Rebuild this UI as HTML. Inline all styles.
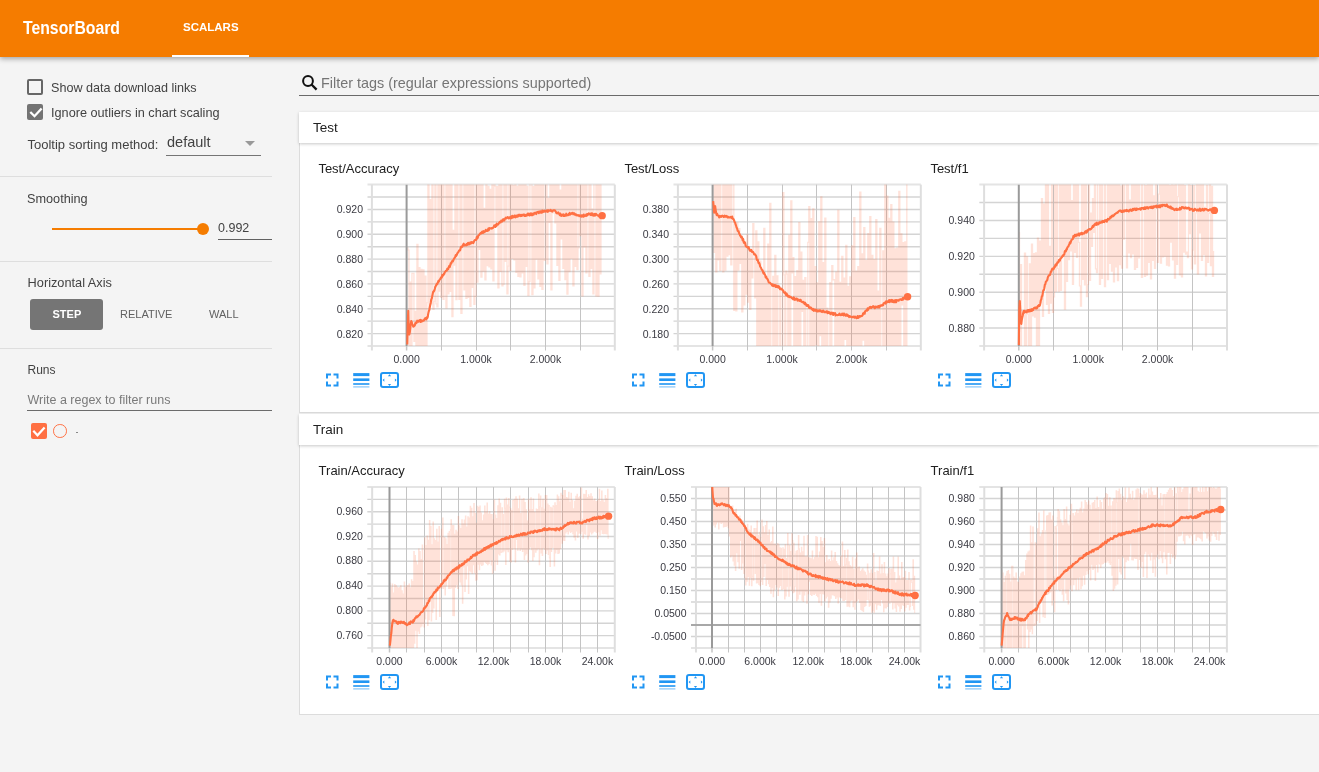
<!DOCTYPE html>
<html><head><meta charset="utf-8"><style>
html,body{margin:0;padding:0;}
body{width:1319px;height:772px;overflow:hidden;background:#f4f4f4;position:relative;font-family:"Liberation Sans", sans-serif;}
.t{position:absolute;white-space:nowrap;}
.r{position:absolute;}
.ic{position:absolute;overflow:visible;}
.ch{position:absolute;left:0;top:0;}
.yl{position:absolute;font-size:10.5px;line-height:10.5px;color:#3a3a42;white-space:nowrap;text-align:right;}
.xl{position:absolute;width:80px;text-align:center;font-size:10.5px;line-height:10.5px;color:#3a3a42;white-space:nowrap;}
</style></head><body>
<div id="wrap" style="position:absolute;left:0;top:0;width:1319px;height:772px;will-change:transform"><div class="r" style="left:0px;top:0px;width:1319px;height:57px;background:#f57c00;box-shadow:0 2px 5px rgba(0,0,0,0.32);z-index:2"></div><div class="t" style="left:23.20px;top:18.76px;font-size:18px;line-height:18px;color:#fff;font-weight:700;transform:scaleX(0.876);transform-origin:0 0;z-index:3">TensorBoard</div><div class="t" style="left:183.00px;top:22.27px;font-size:11.5px;line-height:11.5px;color:#fff;font-weight:700;z-index:3">SCALARS</div><div class="r" style="left:172px;top:55px;width:77px;height:2px;background:#fff;z-index:3"></div><div class="r" style="left:27px;top:79px;width:16px;height:16px;box-sizing:border-box;border:2px solid #666;border-radius:2px"></div><div class="t" style="left:51.00px;top:82.13px;font-size:12.6px;line-height:12.6px;color:#424242;font-weight:400;">Show data download links</div><div class="r" style="left:27px;top:104px;width:16px;height:16px;background:#737373;border-radius:2px"></div><svg class="ic" style="left:27px;top:104px" width="16" height="16" viewBox="0 0 16 16"><path d="M3.3,8 L7.5,12.2 L14.6,4.4" fill="none" stroke="#fff" stroke-width="2.3"/></svg><div class="t" style="left:51.00px;top:106.85px;font-size:12.7px;line-height:12.7px;color:#424242;font-weight:400;">Ignore outliers in chart scaling</div><div class="t" style="left:27.50px;top:138.00px;font-size:13px;line-height:13px;color:#424242;font-weight:400;">Tooltip sorting method:</div><div class="t" style="left:167.00px;top:134.73px;font-size:14.5px;line-height:14.5px;color:#424242;font-weight:400;">default</div><svg class="ic" style="left:244px;top:140px" width="12" height="7" viewBox="0 0 12 7"><path d="M1,1 H11 L6,6Z" fill="#999"/></svg><div class="r" style="left:166px;top:155px;width:95px;height:1px;background:#757575"></div><div class="r" style="left:0px;top:176px;width:272px;height:1px;background:#dedede"></div><div class="t" style="left:27.00px;top:193.05px;font-size:12.7px;line-height:12.7px;color:#424242;font-weight:400;">Smoothing</div><div class="r" style="left:52px;top:227.8px;width:150px;height:2.2px;background:#f57c00"></div><div class="r" style="left:196.6px;top:223px;width:12px;height:12px;border-radius:50%;background:#f57c00"></div><div class="t" style="left:218.00px;top:222.12px;font-size:12.5px;line-height:12.5px;color:#424242;font-weight:400;">0.992</div><div class="r" style="left:218px;top:239px;width:54px;height:1px;background:#616161"></div><div class="r" style="left:0px;top:261px;width:272px;height:1px;background:#dedede"></div><div class="t" style="left:27.60px;top:276.91px;font-size:12.75px;line-height:12.75px;color:#424242;font-weight:400;">Horizontal Axis</div><div class="r" style="left:30px;top:299px;width:73px;height:31px;background:#757575;border-radius:3px"></div><div class="t" style="left:52.50px;top:308.69px;font-size:11px;line-height:11px;color:#fff;font-weight:700;">STEP</div><div class="t" style="left:120.00px;top:308.69px;font-size:11px;line-height:11px;color:#616161;font-weight:400;">RELATIVE</div><div class="t" style="left:209.00px;top:308.69px;font-size:11px;line-height:11px;color:#616161;font-weight:400;">WALL</div><div class="r" style="left:0px;top:348px;width:272px;height:1px;background:#dedede"></div><div class="t" style="left:27.50px;top:363.84px;font-size:12px;line-height:12px;color:#424242;font-weight:400;">Runs</div><div class="t" style="left:27.50px;top:394.02px;font-size:12.5px;line-height:12.5px;color:#7a7a7a;font-weight:400;">Write a regex to filter runs</div><div class="r" style="left:27px;top:409.5px;width:245px;height:1.2px;background:#6b6b6b"></div><div class="r" style="left:31px;top:423px;width:16px;height:16px;background:#ff7043;border-radius:2px"></div><svg class="ic" style="left:31px;top:423px" width="16" height="16" viewBox="0 0 16 16"><path d="M2.3,7.7 L6.5,12.3 L13.6,4.5" fill="none" stroke="#fff" stroke-width="2.2"/></svg><div class="r" style="left:53.1px;top:424.2px;width:13.6px;height:13.6px;box-sizing:border-box;border:1.8px solid #ff7043;border-radius:50%"></div><div class="r" style="left:76px;top:432px;width:2px;height:1px;background:#888"></div><svg class="ic" style="left:300.5px;top:74px" width="18" height="18" viewBox="0 0 18 18"><circle cx="7" cy="7" r="4.9" fill="none" stroke="#111" stroke-width="2"/><path d="M10.5,10.5 L15.6,15.6" stroke="#111" stroke-width="2.3"/></svg><div class="t" style="left:321.00px;top:75.81px;font-size:14.4px;line-height:14.4px;color:#757575;font-weight:400;">Filter tags (regular expressions supported)</div><div class="r" style="left:299px;top:95px;width:1020px;height:1px;background:#6a6a6a"></div><div class="r" style="left:299px;top:143px;width:1020px;height:269px;background:#fff;border-left:1px solid #dcdcdc;border-bottom:1px solid #dcdcdc"></div><div class="r" style="left:299px;top:112px;width:1020px;height:31px;background:#fff;box-shadow:0 1px 3px rgba(0,0,0,0.22)"></div><div class="t" style="left:313.00px;top:120.57px;font-size:13.5px;line-height:13.5px;color:#212121;font-weight:400;">Test</div><div class="r" style="left:299px;top:445px;width:1020px;height:269px;background:#fff;border-left:1px solid #dcdcdc;border-bottom:1px solid #dcdcdc"></div><div class="r" style="left:299px;top:414px;width:1020px;height:31px;background:#fff;box-shadow:0 1px 3px rgba(0,0,0,0.22)"></div><div class="t" style="left:313.00px;top:422.57px;font-size:13.5px;line-height:13.5px;color:#212121;font-weight:400;">Train</div><svg class="ch" width="1319" height="772" viewBox="0 0 1319 772"><line x1="367.5" y1="184.60" x2="614.8" y2="184.60" stroke="#e4e4e4" stroke-width="2"/><line x1="367.5" y1="197.02" x2="614.8" y2="197.02" stroke="#d4d4d4" stroke-width="1.4"/><line x1="367.5" y1="209.43" x2="614.8" y2="209.43" stroke="#d4d4d4" stroke-width="1.4"/><line x1="367.5" y1="221.85" x2="614.8" y2="221.85" stroke="#d4d4d4" stroke-width="1.4"/><line x1="367.5" y1="234.26" x2="614.8" y2="234.26" stroke="#d4d4d4" stroke-width="1.4"/><line x1="367.5" y1="246.68" x2="614.8" y2="246.68" stroke="#d4d4d4" stroke-width="1.4"/><line x1="367.5" y1="259.09" x2="614.8" y2="259.09" stroke="#d4d4d4" stroke-width="1.4"/><line x1="367.5" y1="271.51" x2="614.8" y2="271.51" stroke="#d4d4d4" stroke-width="1.4"/><line x1="367.5" y1="283.92" x2="614.8" y2="283.92" stroke="#d4d4d4" stroke-width="1.4"/><line x1="367.5" y1="296.34" x2="614.8" y2="296.34" stroke="#d4d4d4" stroke-width="1.4"/><line x1="367.5" y1="308.75" x2="614.8" y2="308.75" stroke="#d4d4d4" stroke-width="1.4"/><line x1="367.5" y1="321.17" x2="614.8" y2="321.17" stroke="#d4d4d4" stroke-width="1.4"/><line x1="367.5" y1="333.58" x2="614.8" y2="333.58" stroke="#d4d4d4" stroke-width="1.4"/><line x1="367.5" y1="346.00" x2="614.8" y2="346.00" stroke="#e4e4e4" stroke-width="2"/><line x1="371.90" y1="184.6" x2="371.90" y2="350.5" stroke="#dedede" stroke-width="2"/><line x1="441.50" y1="184.6" x2="441.50" y2="350.5" stroke="#c4c4c4" stroke-width="1"/><line x1="476.50" y1="184.6" x2="476.50" y2="350.5" stroke="#c4c4c4" stroke-width="1"/><line x1="510.50" y1="184.6" x2="510.50" y2="350.5" stroke="#c4c4c4" stroke-width="1"/><line x1="545.50" y1="184.6" x2="545.50" y2="350.5" stroke="#c4c4c4" stroke-width="1"/><line x1="580.50" y1="184.6" x2="580.50" y2="350.5" stroke="#c4c4c4" stroke-width="1"/><line x1="614.80" y1="184.6" x2="614.80" y2="350.5" stroke="#dedede" stroke-width="2"/><clipPath id="c1"><rect x="367.5" y="184.6" width="247.29999999999995" height="161.4"/></clipPath><g clip-path="url(#c1)"><path d="M407.27,247.2h1.35V250.7h-1.35ZM408.27,249.5h1.35V346.2h-1.35ZM409.27,281.5h1.35V346.2h-1.35ZM410.27,281.5h1.35V350.2h-1.35ZM411.27,272.8h1.35V350.2h-1.35ZM412.27,272.7h1.35V274.0h-1.35ZM413.27,272.7h1.35V342.1h-1.35ZM414.27,310.8h1.35V342.1h-1.35ZM415.27,310.8h1.35V366.5h-1.35ZM416.27,243.7h1.35V366.5h-1.35ZM417.27,243.7h1.35V354.6h-1.35ZM418.27,267.1h1.35V354.6h-1.35ZM419.27,267.1h1.35V353.1h-1.35ZM420.27,268.8h1.35V353.1h-1.35ZM421.27,268.8h1.35V375.4h-1.35ZM422.27,269.3h1.35V375.4h-1.35ZM423.27,269.3h1.35V376.8h-1.35ZM424.27,275.6h1.35V376.8h-1.35ZM425.27,275.6h1.35V373.9h-1.35ZM426.27,302.1h1.35V373.9h-1.35ZM427.27,146.7h1.35V303.3h-1.35ZM428.27,146.7h1.35V310.2h-1.35ZM429.27,198.9h1.35V310.2h-1.35ZM430.27,198.9h1.35V304.5h-1.35ZM431.27,114.5h1.35V304.5h-1.35ZM432.27,114.5h1.35V310.1h-1.35ZM433.27,300.9h1.35V310.1h-1.35ZM434.27,108.9h1.35V302.1h-1.35ZM435.27,108.9h1.35V304.4h-1.35ZM436.27,303.2h1.35V307.6h-1.35ZM437.27,113.7h1.35V307.6h-1.35ZM438.27,113.7h1.35V291.7h-1.35ZM439.27,113.2h1.35V291.7h-1.35ZM440.27,113.2h1.35V298.0h-1.35ZM441.27,150.3h1.35V298.0h-1.35ZM442.27,150.3h1.35V299.9h-1.35ZM443.27,169.2h1.35V299.9h-1.35ZM444.27,141.4h1.35V170.4h-1.35ZM445.27,141.4h1.35V308.4h-1.35ZM446.27,143.1h1.35V308.4h-1.35ZM447.27,143.1h1.35V294.4h-1.35ZM448.27,132.2h1.35V294.4h-1.35ZM449.27,132.2h1.35V291.9h-1.35ZM450.27,117.3h1.35V291.9h-1.35ZM451.27,117.3h1.35V317.2h-1.35ZM452.27,229.8h1.35V317.2h-1.35ZM453.27,229.8h1.35V265.7h-1.35ZM454.27,148.4h1.35V265.7h-1.35ZM455.27,148.4h1.35V300.3h-1.35ZM456.27,158.8h1.35V300.3h-1.35ZM457.27,158.8h1.35V253.4h-1.35ZM458.27,252.2h1.35V299.9h-1.35ZM459.27,145.9h1.35V299.9h-1.35ZM460.27,145.9h1.35V314.1h-1.35ZM461.27,141.1h1.35V314.1h-1.35ZM462.27,141.1h1.35V167.7h-1.35ZM463.27,166.5h1.35V290.5h-1.35ZM464.27,163.8h1.35V290.5h-1.35ZM465.27,163.8h1.35V299.1h-1.35ZM466.27,155.8h1.35V299.1h-1.35ZM467.27,155.8h1.35V298.0h-1.35ZM468.27,163.6h1.35V298.0h-1.35ZM469.27,163.6h1.35V306.9h-1.35ZM470.27,140.7h1.35V306.9h-1.35ZM471.27,140.7h1.35V288.0h-1.35ZM472.27,160.8h1.35V288.0h-1.35ZM473.27,160.8h1.35V305.0h-1.35ZM474.27,295.7h1.35V305.0h-1.35ZM475.27,181.1h1.35V296.9h-1.35ZM476.27,181.1h1.35V282.7h-1.35ZM477.27,182.9h1.35V282.7h-1.35ZM478.27,182.9h1.35V250.1h-1.35ZM479.27,175.9h1.35V250.1h-1.35ZM480.27,175.9h1.35V277.7h-1.35ZM481.27,151.7h1.35V277.7h-1.35ZM482.27,151.7h1.35V271.8h-1.35ZM483.27,207.7h1.35V271.8h-1.35ZM484.27,207.7h1.35V280.5h-1.35ZM485.27,169.0h1.35V280.5h-1.35ZM486.27,169.0h1.35V266.2h-1.35ZM487.27,185.7h1.35V266.2h-1.35ZM488.27,185.7h1.35V267.6h-1.35ZM489.27,188.8h1.35V267.6h-1.35ZM490.27,188.8h1.35V269.4h-1.35ZM491.27,174.7h1.35V269.4h-1.35ZM492.27,174.7h1.35V281.5h-1.35ZM493.27,177.4h1.35V281.5h-1.35ZM494.27,177.4h1.35V187.0h-1.35ZM495.27,185.8h1.35V226.2h-1.35ZM496.27,185.9h1.35V226.2h-1.35ZM497.27,185.9h1.35V288.6h-1.35ZM498.27,154.4h1.35V288.6h-1.35ZM499.27,154.4h1.35V272.0h-1.35ZM500.27,178.7h1.35V272.0h-1.35ZM501.27,178.7h1.35V286.6h-1.35ZM502.27,283.8h1.35V286.6h-1.35ZM503.27,176.1h1.35V285.0h-1.35ZM504.27,176.1h1.35V261.9h-1.35ZM505.27,179.7h1.35V261.9h-1.35ZM506.27,179.7h1.35V294.5h-1.35ZM507.27,265.5h1.35V294.5h-1.35ZM508.27,149.3h1.35V266.7h-1.35ZM509.27,149.3h1.35V271.1h-1.35ZM510.27,154.0h1.35V271.1h-1.35ZM511.27,154.0h1.35V258.9h-1.35ZM512.27,184.8h1.35V258.9h-1.35ZM513.27,184.8h1.35V260.5h-1.35ZM514.27,155.5h1.35V260.5h-1.35ZM515.27,155.5h1.35V273.0h-1.35ZM516.27,185.7h1.35V273.0h-1.35ZM517.27,185.7h1.35V277.0h-1.35ZM518.27,162.1h1.35V277.0h-1.35ZM519.27,162.1h1.35V277.6h-1.35ZM520.27,176.9h1.35V277.6h-1.35ZM521.27,176.9h1.35V273.5h-1.35ZM522.27,172.8h1.35V273.5h-1.35ZM523.27,172.8h1.35V286.0h-1.35ZM524.27,181.0h1.35V286.0h-1.35ZM525.27,181.0h1.35V267.0h-1.35ZM526.27,185.7h1.35V267.0h-1.35ZM527.27,185.7h1.35V296.1h-1.35ZM528.27,281.0h1.35V296.1h-1.35ZM529.27,152.5h1.35V282.2h-1.35ZM530.27,152.5h1.35V170.1h-1.35ZM531.27,168.9h1.35V295.2h-1.35ZM532.27,185.9h1.35V295.2h-1.35ZM533.27,185.9h1.35V288.4h-1.35ZM534.27,158.9h1.35V288.4h-1.35ZM535.27,158.9h1.35V259.7h-1.35ZM536.27,172.9h1.35V259.7h-1.35ZM537.27,172.9h1.35V279.4h-1.35ZM538.27,174.1h1.35V279.4h-1.35ZM539.27,174.1h1.35V287.0h-1.35ZM540.27,179.9h1.35V287.0h-1.35ZM541.27,179.9h1.35V289.9h-1.35ZM542.27,182.7h1.35V289.9h-1.35ZM543.27,182.7h1.35V261.0h-1.35ZM544.27,258.3h1.35V261.0h-1.35ZM545.27,183.2h1.35V259.5h-1.35ZM546.27,183.2h1.35V264.5h-1.35ZM547.27,197.8h1.35V264.5h-1.35ZM548.27,197.8h1.35V222.9h-1.35ZM549.27,176.6h1.35V222.9h-1.35ZM550.27,176.6h1.35V290.4h-1.35ZM551.27,183.8h1.35V290.4h-1.35ZM552.27,183.8h1.35V213.6h-1.35ZM553.27,160.6h1.35V213.6h-1.35ZM554.27,160.6h1.35V223.6h-1.35ZM555.27,176.9h1.35V223.6h-1.35ZM556.27,176.9h1.35V266.0h-1.35ZM557.27,182.8h1.35V266.0h-1.35ZM558.27,182.8h1.35V281.0h-1.35ZM559.27,189.6h1.35V281.0h-1.35ZM560.27,189.6h1.35V239.6h-1.35ZM561.27,173.0h1.35V239.6h-1.35ZM562.27,173.0h1.35V269.1h-1.35ZM563.27,179.0h1.35V269.1h-1.35ZM564.27,179.0h1.35V280.3h-1.35ZM565.27,146.9h1.35V280.3h-1.35ZM566.27,146.9h1.35V294.8h-1.35ZM567.27,177.9h1.35V294.8h-1.35ZM568.27,177.9h1.35V272.2h-1.35ZM569.27,178.4h1.35V272.2h-1.35ZM570.27,178.4h1.35V258.9h-1.35ZM571.27,179.1h1.35V258.9h-1.35ZM572.27,179.1h1.35V286.6h-1.35ZM573.27,179.4h1.35V286.6h-1.35ZM574.27,179.4h1.35V267.1h-1.35ZM575.27,146.4h1.35V267.1h-1.35ZM576.27,146.4h1.35V270.2h-1.35ZM577.27,247.2h1.35V270.2h-1.35ZM578.27,166.1h1.35V248.4h-1.35ZM579.27,166.1h1.35V236.3h-1.35ZM580.27,149.5h1.35V236.3h-1.35ZM581.27,149.5h1.35V296.4h-1.35ZM582.27,179.7h1.35V296.4h-1.35ZM583.27,179.7h1.35V247.5h-1.35ZM584.27,181.9h1.35V247.5h-1.35ZM585.27,181.9h1.35V273.5h-1.35ZM586.27,177.5h1.35V273.5h-1.35ZM587.27,162.0h1.35V178.7h-1.35ZM588.27,162.0h1.35V276.9h-1.35ZM589.27,170.0h1.35V276.9h-1.35ZM590.27,170.0h1.35V269.1h-1.35ZM591.27,208.5h1.35V269.1h-1.35ZM592.27,208.5h1.35V294.4h-1.35ZM593.27,179.8h1.35V294.4h-1.35ZM594.27,179.8h1.35V183.9h-1.35ZM595.27,182.7h1.35V296.5h-1.35ZM596.27,148.4h1.35V296.5h-1.35ZM597.27,148.4h1.35V296.7h-1.35ZM598.27,175.6h1.35V296.7h-1.35ZM599.27,175.6h1.35V274.5h-1.35ZM600.27,175.3h1.35V274.5h-1.35Z" fill="#ff7043" fill-opacity="0.2"/><line x1="406.60" y1="184.6" x2="406.60" y2="350.5" stroke="#9a9a9a" stroke-width="2"/><path d="M407.27,344.43 L407.77,323.03 L408.27,310.70 L408.77,333.72 L409.27,334.50 L409.77,332.51 L410.27,328.33 L410.77,323.28 L411.27,321.04 L411.77,322.26 L412.27,324.52 L412.77,324.93 L413.27,326.78 L413.77,326.41 L414.27,325.97 L414.77,325.52 L415.27,323.27 L415.77,322.65 L416.27,323.17 L416.77,322.17 L417.27,320.69 L417.77,321.35 L418.27,321.80 L418.77,321.71 L419.27,320.29 L419.77,320.48 L420.27,319.80 L420.77,322.03 L421.27,320.30 L421.77,321.46 L422.27,320.88 L422.77,320.71 L423.27,320.25 L423.77,320.64 L424.27,319.82 L424.77,318.84 L425.27,318.10 L425.77,318.64 L426.27,319.36 L426.77,317.27 L427.27,318.21 L427.77,316.83 L428.27,313.45 L428.77,311.26 L429.27,310.06 L429.77,307.19 L430.27,304.82 L430.77,302.68 L431.27,299.51 L431.77,298.60 L432.27,296.03 L432.77,293.61 L433.27,291.47 L433.77,291.56 L434.27,290.59 L434.77,288.94 L435.27,286.89 L435.77,286.03 L436.27,285.04 L436.77,283.87 L437.27,284.18 L437.77,282.94 L438.27,281.16 L438.77,281.78 L439.27,280.14 L439.77,279.61 L440.27,279.04 L440.77,278.10 L441.27,277.12 L441.77,277.55 L442.27,274.97 L442.77,275.62 L443.27,275.45 L443.77,273.89 L444.27,274.04 L444.77,271.95 L445.27,271.87 L445.77,270.91 L446.27,270.57 L446.77,270.65 L447.27,268.74 L447.77,268.57 L448.27,269.11 L448.77,267.10 L449.27,265.86 L449.77,267.02 L450.27,265.15 L450.77,263.11 L451.27,263.55 L451.77,261.74 L452.27,260.94 L452.77,261.44 L453.27,260.40 L453.77,259.05 L454.27,258.42 L454.77,257.69 L455.27,256.65 L455.77,255.04 L456.27,255.79 L456.77,255.01 L457.27,253.42 L457.77,252.59 L458.27,252.28 L458.77,251.18 L459.27,250.26 L459.77,250.53 L460.27,249.81 L460.77,247.29 L461.27,246.56 L461.77,247.18 L462.27,246.79 L462.77,245.49 L463.27,244.38 L463.77,243.72 L464.27,245.38 L464.77,245.51 L465.27,245.00 L465.77,244.84 L466.27,245.27 L466.77,244.13 L467.27,244.95 L467.77,243.30 L468.27,242.77 L468.77,244.41 L469.27,243.97 L469.77,244.09 L470.27,242.45 L470.77,242.72 L471.27,243.27 L471.77,241.96 L472.27,242.46 L472.77,242.89 L473.27,243.10 L473.77,242.03 L474.27,240.73 L474.77,240.19 L475.27,239.87 L475.77,239.83 L476.27,239.86 L476.77,237.03 L477.27,238.57 L477.77,237.72 L478.27,235.42 L478.77,235.34 L479.27,234.82 L479.77,234.12 L480.27,233.44 L480.77,232.82 L481.27,233.50 L481.77,232.57 L482.27,231.55 L482.77,233.00 L483.27,232.73 L483.77,231.16 L484.27,232.22 L484.77,231.84 L485.27,231.03 L485.77,229.76 L486.27,230.94 L486.77,231.07 L487.27,230.85 L487.77,230.74 L488.27,228.68 L488.77,230.30 L489.27,228.02 L489.77,228.39 L490.27,228.55 L490.77,228.53 L491.27,228.03 L491.77,228.64 L492.27,228.09 L492.77,228.03 L493.27,227.36 L493.77,226.61 L494.27,225.36 L494.77,226.53 L495.27,226.84 L495.77,224.78 L496.27,226.28 L496.77,223.68 L497.27,224.21 L497.77,224.67 L498.27,224.23 L498.77,223.57 L499.27,222.54 L499.77,222.11 L500.27,221.52 L500.77,222.33 L501.27,220.54 L501.77,220.44 L502.27,221.44 L502.77,220.47 L503.27,219.13 L503.77,219.72 L504.27,220.52 L504.77,219.22 L505.27,218.31 L505.77,217.69 L506.27,218.40 L506.77,217.68 L507.27,217.63 L507.77,217.01 L508.27,218.14 L508.77,218.45 L509.27,217.66 L509.77,217.78 L510.27,216.92 L510.77,218.40 L511.27,216.66 L511.77,217.98 L512.27,215.78 L512.77,217.14 L513.27,217.50 L513.77,216.68 L514.27,215.74 L514.77,215.54 L515.27,217.36 L515.77,217.31 L516.27,215.51 L516.77,215.85 L517.27,216.75 L517.77,216.77 L518.27,214.78 L518.77,215.91 L519.27,215.16 L519.77,214.72 L520.27,216.06 L520.77,215.52 L521.27,214.82 L521.77,216.03 L522.27,214.96 L522.77,214.76 L523.27,214.78 L523.77,214.48 L524.27,215.90 L524.77,214.66 L525.27,215.99 L525.77,215.36 L526.27,214.96 L526.77,215.71 L527.27,214.45 L527.77,213.61 L528.27,214.98 L528.77,213.55 L529.27,215.47 L529.77,215.52 L530.27,214.12 L530.77,213.36 L531.27,215.29 L531.77,213.62 L532.27,215.17 L532.77,213.92 L533.27,214.74 L533.77,214.58 L534.27,212.80 L534.77,213.09 L535.27,213.19 L535.77,212.53 L536.27,214.09 L536.77,212.31 L537.27,212.24 L537.77,211.99 L538.27,211.80 L538.77,213.19 L539.27,211.67 L539.77,212.43 L540.27,211.24 L540.77,212.69 L541.27,212.50 L541.77,212.74 L542.27,210.58 L542.77,211.86 L543.27,211.87 L543.77,210.85 L544.27,211.53 L544.77,210.56 L545.27,211.04 L545.77,211.64 L546.27,211.58 L546.77,210.44 L547.27,210.28 L547.77,211.87 L548.27,210.22 L548.77,210.77 L549.27,210.64 L549.77,210.52 L550.27,210.91 L550.77,209.95 L551.27,210.75 L551.77,211.23 L552.27,211.63 L552.77,210.81 L553.27,210.21 L553.77,210.33 L554.27,210.18 L554.77,210.36 L555.27,211.00 L555.77,211.45 L556.27,213.02 L556.77,212.86 L557.27,213.51 L557.77,212.80 L558.27,212.39 L558.77,213.53 L559.27,214.10 L559.77,215.06 L560.27,213.57 L560.77,215.07 L561.27,215.80 L561.77,214.77 L562.27,215.34 L562.77,214.67 L563.27,215.98 L563.77,214.41 L564.27,215.93 L564.77,215.72 L565.27,215.74 L565.77,215.63 L566.27,213.69 L566.77,215.40 L567.27,214.86 L567.77,215.26 L568.27,215.00 L568.77,213.89 L569.27,214.60 L569.77,212.94 L570.27,214.56 L570.77,213.74 L571.27,213.90 L571.77,213.14 L572.27,213.39 L572.77,212.81 L573.27,214.29 L573.77,213.84 L574.27,213.33 L574.77,214.74 L575.27,214.53 L575.77,214.37 L576.27,215.42 L576.77,214.73 L577.27,215.50 L577.77,215.38 L578.27,215.16 L578.77,215.32 L579.27,216.05 L579.77,215.30 L580.27,215.47 L580.77,215.86 L581.27,216.65 L581.77,215.32 L582.27,216.53 L582.77,215.39 L583.27,216.69 L583.77,214.64 L584.27,216.22 L584.77,216.03 L585.27,215.92 L585.77,215.34 L586.27,214.45 L586.77,215.84 L587.27,214.02 L587.77,215.00 L588.27,214.20 L588.77,213.30 L589.27,213.97 L589.77,213.76 L590.27,214.90 L590.77,213.62 L591.27,215.11 L591.77,213.34 L592.27,213.53 L592.77,214.82 L593.27,215.59 L593.77,214.93 L594.27,213.95 L594.77,215.73 L595.27,215.24 L595.77,213.77 L596.27,214.12 L596.77,214.77 L597.27,215.15 L597.77,215.30 L598.27,215.98 L598.77,215.53 L599.27,216.38 L599.77,215.17 L600.27,215.08 L600.77,215.88 L601.27,216.49 L601.77,215.47 L602.16,215.67" fill="none" stroke="#ff7043" stroke-width="2.1" stroke-linejoin="round"/></g><line x1="406.60" y1="346" x2="406.60" y2="350.5" stroke="#c4c4c4" stroke-width="1.5"/><circle cx="602.16" cy="215.67" r="3.7" fill="#ff7043"/></svg><div class="yl" style="right:956.00px;top:204.34px">0.920</div><div class="yl" style="right:956.00px;top:229.17px">0.900</div><div class="yl" style="right:956.00px;top:254.00px">0.880</div><div class="yl" style="right:956.00px;top:278.83px">0.860</div><div class="yl" style="right:956.00px;top:303.67px">0.840</div><div class="yl" style="right:956.00px;top:328.50px">0.820</div><div class="xl" style="left:366.60px;top:354.11px">0.000</div><div class="xl" style="left:436.00px;top:354.11px">1.000k</div><div class="xl" style="left:505.40px;top:354.11px">2.000k</div><div class="t" style="left:318.40px;top:162.10px;font-size:13px;line-height:13px;color:#212121;font-weight:400;">Test/Accuracy</div><svg class="ic" style="left:323.90px;top:369.80px" width="80" height="22" viewBox="0 0 80 22"><path d="M3,8.6 V4.6 H7 M9.5,4.6 H13.5 V8.6 M13.5,11.600000000000001 V15.600000000000001 H9.5 M7,15.600000000000001 H3 V11.600000000000001" fill="none" stroke="#2196f3" stroke-width="2"/><rect x="29.2" y="3.1" width="16.2" height="3" fill="#2196f3"/><rect x="29.2" y="8.4" width="16.2" height="2.6" fill="#2196f3"/><rect x="29.2" y="13.2" width="16.2" height="1.6" fill="#2196f3"/><rect x="29.2" y="16.3" width="16.2" height="1.2" fill="#2196f3" opacity="0.55"/><rect x="57" y="3" width="17" height="14.1" rx="2" fill="none" stroke="#2196f3" stroke-width="2"/><path d="M63.9,6.199999999999999 L65.5,4.199999999999999 L67.1,6.199999999999999Z M63.9,14.0 L65.5,16.0 L67.1,14.0Z M60.3,8.5 L58.6,10.1 L60.3,11.7Z M70.9,8.5 L72.6,10.1 L70.9,11.7Z" fill="#2196f3"/></svg><svg class="ch" width="1319" height="772" viewBox="0 0 1319 772"><line x1="673.5" y1="184.60" x2="920.8" y2="184.60" stroke="#e4e4e4" stroke-width="2"/><line x1="673.5" y1="197.02" x2="920.8" y2="197.02" stroke="#d4d4d4" stroke-width="1.4"/><line x1="673.5" y1="209.43" x2="920.8" y2="209.43" stroke="#d4d4d4" stroke-width="1.4"/><line x1="673.5" y1="221.85" x2="920.8" y2="221.85" stroke="#d4d4d4" stroke-width="1.4"/><line x1="673.5" y1="234.26" x2="920.8" y2="234.26" stroke="#d4d4d4" stroke-width="1.4"/><line x1="673.5" y1="246.68" x2="920.8" y2="246.68" stroke="#d4d4d4" stroke-width="1.4"/><line x1="673.5" y1="259.09" x2="920.8" y2="259.09" stroke="#d4d4d4" stroke-width="1.4"/><line x1="673.5" y1="271.51" x2="920.8" y2="271.51" stroke="#d4d4d4" stroke-width="1.4"/><line x1="673.5" y1="283.92" x2="920.8" y2="283.92" stroke="#d4d4d4" stroke-width="1.4"/><line x1="673.5" y1="296.34" x2="920.8" y2="296.34" stroke="#d4d4d4" stroke-width="1.4"/><line x1="673.5" y1="308.75" x2="920.8" y2="308.75" stroke="#d4d4d4" stroke-width="1.4"/><line x1="673.5" y1="321.17" x2="920.8" y2="321.17" stroke="#d4d4d4" stroke-width="1.4"/><line x1="673.5" y1="333.58" x2="920.8" y2="333.58" stroke="#d4d4d4" stroke-width="1.4"/><line x1="673.5" y1="346.00" x2="920.8" y2="346.00" stroke="#e4e4e4" stroke-width="2"/><line x1="677.90" y1="184.6" x2="677.90" y2="350.5" stroke="#dedede" stroke-width="2"/><line x1="747.50" y1="184.6" x2="747.50" y2="350.5" stroke="#c4c4c4" stroke-width="1"/><line x1="782.50" y1="184.6" x2="782.50" y2="350.5" stroke="#c4c4c4" stroke-width="1"/><line x1="816.50" y1="184.6" x2="816.50" y2="350.5" stroke="#c4c4c4" stroke-width="1"/><line x1="851.50" y1="184.6" x2="851.50" y2="350.5" stroke="#c4c4c4" stroke-width="1"/><line x1="886.50" y1="184.6" x2="886.50" y2="350.5" stroke="#c4c4c4" stroke-width="1"/><line x1="920.80" y1="184.6" x2="920.80" y2="350.5" stroke="#dedede" stroke-width="2"/><clipPath id="c2"><rect x="673.5" y="184.6" width="247.29999999999995" height="161.4"/></clipPath><g clip-path="url(#c2)"><path d="M713.15,164.2h1.35V253.0h-1.35ZM714.15,162.0h1.35V253.0h-1.35ZM715.15,162.0h1.35V272.6h-1.35ZM716.15,136.9h1.35V272.6h-1.35ZM717.15,136.9h1.35V260.4h-1.35ZM718.15,158.7h1.35V260.4h-1.35ZM719.15,158.7h1.35V271.1h-1.35ZM720.15,155.5h1.35V271.1h-1.35ZM721.15,142.0h1.35V156.7h-1.35ZM722.15,142.0h1.35V272.5h-1.35ZM723.15,152.3h1.35V272.5h-1.35ZM724.15,152.3h1.35V270.8h-1.35ZM725.15,156.3h1.35V270.8h-1.35ZM726.15,156.3h1.35V256.7h-1.35ZM727.15,148.4h1.35V256.7h-1.35ZM728.15,148.4h1.35V255.3h-1.35ZM729.15,150.8h1.35V255.3h-1.35ZM730.15,150.8h1.35V265.6h-1.35ZM731.15,155.4h1.35V265.6h-1.35ZM732.15,147.9h1.35V156.6h-1.35ZM733.15,147.9h1.35V311.0h-1.35ZM734.15,221.8h1.35V311.0h-1.35ZM735.15,221.8h1.35V311.6h-1.35ZM736.15,222.2h1.35V311.6h-1.35ZM737.15,222.2h1.35V270.7h-1.35ZM738.15,227.9h1.35V270.7h-1.35ZM739.15,227.9h1.35V263.9h-1.35ZM740.15,235.6h1.35V263.9h-1.35ZM741.15,235.6h1.35V312.5h-1.35ZM742.15,239.2h1.35V312.5h-1.35ZM743.15,239.2h1.35V305.6h-1.35ZM744.15,243.0h1.35V305.6h-1.35ZM745.15,243.0h1.35V294.7h-1.35ZM746.15,234.3h1.35V294.7h-1.35ZM747.15,234.3h1.35V302.8h-1.35ZM748.15,247.9h1.35V302.8h-1.35ZM749.15,247.9h1.35V310.1h-1.35ZM750.15,250.1h1.35V310.1h-1.35ZM751.15,250.1h1.35V278.5h-1.35ZM752.15,223.0h1.35V278.5h-1.35ZM753.15,223.0h1.35V254.7h-1.35ZM754.15,253.5h1.35V298.4h-1.35ZM755.15,230.2h1.35V298.4h-1.35ZM756.15,230.2h1.35V361.2h-1.35ZM757.15,241.2h1.35V361.2h-1.35ZM758.15,241.2h1.35V352.0h-1.35ZM759.15,260.4h1.35V352.0h-1.35ZM760.15,260.4h1.35V369.2h-1.35ZM761.15,269.1h1.35V369.2h-1.35ZM762.15,269.1h1.35V400.3h-1.35ZM763.15,227.8h1.35V400.3h-1.35ZM764.15,227.8h1.35V396.3h-1.35ZM765.15,275.8h1.35V396.3h-1.35ZM766.15,275.8h1.35V394.3h-1.35ZM767.15,243.6h1.35V394.3h-1.35ZM768.15,243.6h1.35V374.0h-1.35ZM769.15,202.7h1.35V374.0h-1.35ZM770.15,202.7h1.35V371.5h-1.35ZM771.15,370.3h1.35V381.2h-1.35ZM772.15,275.7h1.35V381.2h-1.35ZM773.15,275.7h1.35V373.1h-1.35ZM774.15,254.7h1.35V373.1h-1.35ZM775.15,254.7h1.35V355.3h-1.35ZM776.15,275.3h1.35V355.3h-1.35ZM777.15,275.3h1.35V352.3h-1.35ZM778.15,351.1h1.35V371.1h-1.35ZM779.15,286.8h1.35V371.1h-1.35ZM780.15,286.8h1.35V398.8h-1.35ZM781.15,387.1h1.35V398.8h-1.35ZM782.15,192.0h1.35V388.3h-1.35ZM783.15,192.0h1.35V275.5h-1.35ZM784.15,274.3h1.35V360.1h-1.35ZM785.15,270.6h1.35V360.1h-1.35ZM786.15,270.6h1.35V274.7h-1.35ZM787.15,273.5h1.35V382.5h-1.35ZM788.15,234.7h1.35V382.5h-1.35ZM789.15,234.7h1.35V394.6h-1.35ZM790.15,200.3h1.35V394.6h-1.35ZM791.15,200.3h1.35V273.5h-1.35ZM792.15,257.1h1.35V273.5h-1.35ZM793.15,257.1h1.35V378.0h-1.35ZM794.15,276.0h1.35V378.0h-1.35ZM795.15,276.0h1.35V383.7h-1.35ZM796.15,270.1h1.35V383.7h-1.35ZM797.15,270.1h1.35V398.0h-1.35ZM798.15,221.9h1.35V398.0h-1.35ZM799.15,221.9h1.35V370.6h-1.35ZM800.15,251.6h1.35V370.6h-1.35ZM801.15,251.6h1.35V312.1h-1.35ZM802.15,279.7h1.35V312.1h-1.35ZM803.15,279.7h1.35V388.6h-1.35ZM804.15,277.0h1.35V388.6h-1.35ZM805.15,277.0h1.35V390.5h-1.35ZM806.15,379.7h1.35V390.5h-1.35ZM807.15,241.7h1.35V380.9h-1.35ZM808.15,205.9h1.35V242.9h-1.35ZM809.15,205.9h1.35V369.9h-1.35ZM810.15,218.1h1.35V369.9h-1.35ZM811.15,218.1h1.35V375.7h-1.35ZM812.15,208.2h1.35V375.7h-1.35ZM813.15,208.2h1.35V366.3h-1.35ZM814.15,265.9h1.35V366.3h-1.35ZM815.15,265.9h1.35V345.3h-1.35ZM816.15,282.3h1.35V345.3h-1.35ZM817.15,282.3h1.35V360.4h-1.35ZM818.15,221.3h1.35V360.4h-1.35ZM819.15,221.3h1.35V336.3h-1.35ZM820.15,196.3h1.35V336.3h-1.35ZM821.15,196.3h1.35V371.1h-1.35ZM822.15,262.1h1.35V371.1h-1.35ZM823.15,262.1h1.35V376.2h-1.35ZM824.15,217.4h1.35V376.2h-1.35ZM825.15,217.4h1.35V373.7h-1.35ZM826.15,307.6h1.35V373.7h-1.35ZM827.15,307.6h1.35V365.7h-1.35ZM828.15,364.5h1.35V378.9h-1.35ZM829.15,282.1h1.35V378.9h-1.35ZM830.15,282.1h1.35V369.2h-1.35ZM831.15,265.1h1.35V369.2h-1.35ZM832.15,265.1h1.35V280.6h-1.35ZM833.15,279.1h1.35V280.6h-1.35ZM834.15,279.1h1.35V371.8h-1.35ZM835.15,271.5h1.35V371.8h-1.35ZM836.15,271.5h1.35V363.4h-1.35ZM837.15,209.8h1.35V363.4h-1.35ZM838.15,209.8h1.35V389.0h-1.35ZM839.15,281.8h1.35V389.0h-1.35ZM840.15,281.8h1.35V373.3h-1.35ZM841.15,255.8h1.35V373.3h-1.35ZM842.15,255.8h1.35V367.2h-1.35ZM843.15,277.5h1.35V367.2h-1.35ZM844.15,277.5h1.35V339.9h-1.35ZM845.15,244.8h1.35V339.9h-1.35ZM846.15,244.8h1.35V361.8h-1.35ZM847.15,285.7h1.35V361.8h-1.35ZM848.15,285.7h1.35V365.6h-1.35ZM849.15,276.3h1.35V365.6h-1.35ZM850.15,276.3h1.35V396.1h-1.35ZM851.15,245.3h1.35V396.1h-1.35ZM852.15,245.3h1.35V379.4h-1.35ZM853.15,216.9h1.35V379.4h-1.35ZM854.15,216.9h1.35V365.0h-1.35ZM855.15,270.4h1.35V365.0h-1.35ZM856.15,270.4h1.35V377.5h-1.35ZM857.15,266.1h1.35V377.5h-1.35ZM858.15,266.1h1.35V370.1h-1.35ZM859.15,191.4h1.35V370.1h-1.35ZM860.15,191.4h1.35V372.9h-1.35ZM861.15,253.3h1.35V372.9h-1.35ZM862.15,253.3h1.35V340.7h-1.35ZM863.15,226.9h1.35V340.7h-1.35ZM864.15,226.9h1.35V352.3h-1.35ZM865.15,259.7h1.35V352.3h-1.35ZM866.15,259.7h1.35V372.3h-1.35ZM867.15,233.1h1.35V372.3h-1.35ZM868.15,233.1h1.35V369.6h-1.35ZM869.15,215.9h1.35V369.6h-1.35ZM870.15,215.9h1.35V372.0h-1.35ZM871.15,254.8h1.35V372.0h-1.35ZM872.15,254.8h1.35V368.6h-1.35ZM873.15,259.1h1.35V368.6h-1.35ZM874.15,259.1h1.35V395.3h-1.35ZM875.15,219.0h1.35V395.3h-1.35ZM876.15,219.0h1.35V376.0h-1.35ZM877.15,290.6h1.35V376.0h-1.35ZM878.15,290.6h1.35V371.3h-1.35ZM879.15,227.7h1.35V371.3h-1.35ZM880.15,227.7h1.35V393.1h-1.35ZM881.15,369.0h1.35V393.1h-1.35ZM882.15,250.2h1.35V370.2h-1.35ZM883.15,250.2h1.35V369.6h-1.35ZM884.15,183.2h1.35V369.6h-1.35ZM885.15,183.2h1.35V382.0h-1.35ZM886.15,195.4h1.35V382.0h-1.35ZM887.15,195.4h1.35V393.5h-1.35ZM888.15,217.8h1.35V393.5h-1.35ZM889.15,217.8h1.35V373.1h-1.35ZM890.15,204.0h1.35V373.1h-1.35ZM891.15,204.0h1.35V366.4h-1.35ZM892.15,221.4h1.35V366.4h-1.35ZM893.15,221.4h1.35V397.6h-1.35ZM894.15,248.2h1.35V397.6h-1.35ZM895.15,248.2h1.35V368.4h-1.35ZM896.15,247.4h1.35V368.4h-1.35ZM897.15,247.4h1.35V346.7h-1.35ZM898.15,190.8h1.35V346.7h-1.35ZM899.15,190.8h1.35V369.5h-1.35ZM900.15,233.2h1.35V369.5h-1.35ZM901.15,233.2h1.35V305.6h-1.35ZM902.15,242.0h1.35V305.6h-1.35ZM903.15,242.0h1.35V372.1h-1.35ZM904.15,241.2h1.35V372.1h-1.35ZM905.15,241.2h1.35V360.3h-1.35ZM906.15,183.8h1.35V360.3h-1.35Z" fill="#ff7043" fill-opacity="0.2"/><line x1="712.60" y1="184.6" x2="712.60" y2="350.5" stroke="#9a9a9a" stroke-width="2"/><path d="M713.15,201.03 L713.65,206.07 L714.15,212.71 L714.65,207.23 L715.15,206.15 L715.65,209.77 L716.15,213.04 L716.65,215.08 L717.15,213.83 L717.65,215.36 L718.15,215.61 L718.65,215.99 L719.15,217.48 L719.65,215.94 L720.15,216.58 L720.65,216.15 L721.15,216.87 L721.65,216.21 L722.15,215.58 L722.65,216.18 L723.15,216.12 L723.65,217.01 L724.15,216.48 L724.65,215.64 L725.15,216.78 L725.65,215.99 L726.15,216.55 L726.65,215.95 L727.15,216.46 L727.65,217.40 L728.15,216.85 L728.65,217.46 L729.15,217.54 L729.65,217.23 L730.15,217.43 L730.65,216.93 L731.15,217.51 L731.65,217.95 L732.15,216.46 L732.65,218.73 L733.15,218.62 L733.65,219.30 L734.15,220.52 L734.65,222.16 L735.15,222.74 L735.65,224.69 L736.15,225.93 L736.65,227.68 L737.15,228.45 L737.65,230.73 L738.15,231.23 L738.65,231.38 L739.15,233.58 L739.65,234.11 L740.15,235.65 L740.65,236.05 L741.15,237.51 L741.65,236.69 L742.15,237.78 L742.65,240.31 L743.15,239.05 L743.65,242.05 L744.15,242.95 L744.65,242.10 L745.15,243.06 L745.65,245.75 L746.15,246.47 L746.65,246.82 L747.15,247.04 L747.65,247.68 L748.15,247.20 L748.65,247.06 L749.15,249.04 L749.65,250.19 L750.15,250.89 L750.65,250.45 L751.15,249.84 L751.65,250.78 L752.15,251.97 L752.65,252.02 L753.15,252.11 L753.65,253.04 L754.15,254.31 L754.65,254.00 L755.15,254.53 L755.65,255.20 L756.15,255.97 L756.65,258.77 L757.15,260.03 L757.65,259.57 L758.15,261.64 L758.65,263.26 L759.15,262.88 L759.65,264.16 L760.15,266.49 L760.65,267.29 L761.15,268.04 L761.65,269.50 L762.15,270.07 L762.65,270.55 L763.15,272.47 L763.65,273.63 L764.15,272.79 L764.65,274.23 L765.15,275.00 L765.65,277.20 L766.15,276.65 L766.65,278.37 L767.15,278.66 L767.65,279.36 L768.15,280.48 L768.65,282.22 L769.15,282.51 L769.65,282.72 L770.15,282.78 L770.65,283.45 L771.15,283.96 L771.65,284.59 L772.15,285.62 L772.65,284.29 L773.15,285.93 L773.65,286.08 L774.15,285.23 L774.65,284.94 L775.15,285.19 L775.65,287.00 L776.15,285.50 L776.65,286.81 L777.15,287.04 L777.65,286.15 L778.15,286.06 L778.65,287.68 L779.15,286.56 L779.65,287.92 L780.15,289.26 L780.65,288.60 L781.15,288.75 L781.65,288.77 L782.15,289.72 L782.65,290.27 L783.15,290.30 L783.65,292.15 L784.15,292.42 L784.65,293.18 L785.15,292.28 L785.65,293.11 L786.15,295.16 L786.65,293.55 L787.15,294.88 L787.65,296.41 L788.15,295.56 L788.65,296.04 L789.15,297.19 L789.65,296.47 L790.15,296.83 L790.65,297.12 L791.15,297.07 L791.65,298.07 L792.15,298.41 L792.65,298.64 L793.15,299.31 L793.65,297.39 L794.15,297.98 L794.65,299.82 L795.15,299.56 L795.65,299.64 L796.15,298.56 L796.65,298.51 L797.15,299.02 L797.65,300.61 L798.15,300.45 L798.65,299.73 L799.15,300.57 L799.65,300.91 L800.15,300.05 L800.65,299.80 L801.15,301.59 L801.65,301.51 L802.15,302.03 L802.65,302.28 L803.15,301.81 L803.65,302.88 L804.15,302.61 L804.65,304.25 L805.15,302.86 L805.65,304.57 L806.15,304.17 L806.65,305.86 L807.15,306.02 L807.65,304.97 L808.15,305.01 L808.65,305.91 L809.15,307.98 L809.65,307.94 L810.15,308.20 L810.65,307.45 L811.15,307.86 L811.65,308.80 L812.15,309.40 L812.65,309.99 L813.15,308.95 L813.65,310.81 L814.15,309.50 L814.65,310.64 L815.15,309.79 L815.65,309.80 L816.15,311.19 L816.65,309.74 L817.15,310.47 L817.65,311.38 L818.15,311.34 L818.65,311.15 L819.15,310.12 L819.65,311.06 L820.15,310.77 L820.65,310.45 L821.15,311.58 L821.65,311.42 L822.15,312.04 L822.65,311.09 L823.15,310.57 L823.65,310.99 L824.15,312.19 L824.65,312.23 L825.15,312.22 L825.65,311.77 L826.15,312.32 L826.65,311.27 L827.15,311.45 L827.65,313.21 L828.15,311.74 L828.65,313.04 L829.15,312.42 L829.65,312.26 L830.15,313.79 L830.65,314.14 L831.15,312.97 L831.65,312.71 L832.15,313.55 L832.65,312.87 L833.15,314.95 L833.65,312.92 L834.15,314.16 L834.65,313.49 L835.15,313.20 L835.65,315.50 L836.15,314.79 L836.65,314.87 L837.15,315.04 L837.65,315.10 L838.15,314.71 L838.65,314.86 L839.15,314.08 L839.65,313.61 L840.15,315.06 L840.65,315.10 L841.15,315.13 L841.65,314.94 L842.15,313.66 L842.65,314.98 L843.15,313.71 L843.65,315.53 L844.15,313.57 L844.65,314.18 L845.15,314.82 L845.65,315.61 L846.15,315.24 L846.65,314.29 L847.15,315.92 L847.65,314.99 L848.15,315.54 L848.65,315.86 L849.15,317.13 L849.65,316.03 L850.15,316.55 L850.65,316.72 L851.15,316.89 L851.65,316.96 L852.15,317.29 L852.65,316.76 L853.15,316.89 L853.65,316.51 L854.15,317.52 L854.65,317.73 L855.15,316.62 L855.65,317.05 L856.15,317.34 L856.65,318.16 L857.15,318.07 L857.65,316.05 L858.15,317.91 L858.65,317.54 L859.15,316.15 L859.65,316.03 L860.15,316.67 L860.65,316.12 L861.15,316.12 L861.65,315.98 L862.15,315.72 L862.65,315.15 L863.15,313.41 L863.65,313.74 L864.15,312.70 L864.65,313.72 L865.15,311.38 L865.65,310.78 L866.15,310.72 L866.65,309.91 L867.15,310.66 L867.65,308.28 L868.15,309.76 L868.65,308.44 L869.15,308.27 L869.65,307.10 L870.15,307.64 L870.65,306.90 L871.15,308.09 L871.65,307.53 L872.15,306.83 L872.65,306.89 L873.15,306.16 L873.65,306.26 L874.15,307.37 L874.65,308.25 L875.15,307.97 L875.65,306.61 L876.15,306.59 L876.65,307.22 L877.15,306.80 L877.65,307.44 L878.15,306.03 L878.65,306.39 L879.15,307.53 L879.65,305.71 L880.15,306.32 L880.65,305.45 L881.15,305.26 L881.65,305.72 L882.15,305.72 L882.65,304.48 L883.15,305.14 L883.65,303.17 L884.15,302.98 L884.65,302.73 L885.15,302.39 L885.65,303.57 L886.15,301.34 L886.65,302.63 L887.15,302.01 L887.65,301.46 L888.15,301.09 L888.65,301.92 L889.15,300.03 L889.65,302.11 L890.15,300.82 L890.65,300.51 L891.15,299.97 L891.65,301.79 L892.15,300.03 L892.65,301.88 L893.15,300.50 L893.65,302.22 L894.15,301.38 L894.65,302.24 L895.15,300.08 L895.65,300.75 L896.15,302.27 L896.65,300.03 L897.15,300.44 L897.65,300.37 L898.15,300.45 L898.65,300.70 L899.15,299.82 L899.65,299.59 L900.15,299.31 L900.65,299.21 L901.15,299.73 L901.65,299.99 L902.15,299.01 L902.65,298.19 L903.15,299.57 L903.65,297.80 L904.15,298.55 L904.65,298.45 L905.15,297.71 L905.65,296.97 L906.15,296.89 L906.65,297.61 L907.15,297.97 L907.60,296.71" fill="none" stroke="#ff7043" stroke-width="2.1" stroke-linejoin="round"/></g><line x1="712.60" y1="346" x2="712.60" y2="350.5" stroke="#c4c4c4" stroke-width="1.5"/><circle cx="907.60" cy="296.71" r="3.7" fill="#ff7043"/></svg><div class="yl" style="right:650.00px;top:204.34px">0.380</div><div class="yl" style="right:650.00px;top:229.17px">0.340</div><div class="yl" style="right:650.00px;top:254.00px">0.300</div><div class="yl" style="right:650.00px;top:278.83px">0.260</div><div class="yl" style="right:650.00px;top:303.67px">0.220</div><div class="yl" style="right:650.00px;top:328.50px">0.180</div><div class="xl" style="left:672.60px;top:354.11px">0.000</div><div class="xl" style="left:742.00px;top:354.11px">1.000k</div><div class="xl" style="left:811.40px;top:354.11px">2.000k</div><div class="t" style="left:624.40px;top:162.10px;font-size:13px;line-height:13px;color:#212121;font-weight:400;">Test/Loss</div><svg class="ic" style="left:629.90px;top:369.80px" width="80" height="22" viewBox="0 0 80 22"><path d="M3,8.6 V4.6 H7 M9.5,4.6 H13.5 V8.6 M13.5,11.600000000000001 V15.600000000000001 H9.5 M7,15.600000000000001 H3 V11.600000000000001" fill="none" stroke="#2196f3" stroke-width="2"/><rect x="29.2" y="3.1" width="16.2" height="3" fill="#2196f3"/><rect x="29.2" y="8.4" width="16.2" height="2.6" fill="#2196f3"/><rect x="29.2" y="13.2" width="16.2" height="1.6" fill="#2196f3"/><rect x="29.2" y="16.3" width="16.2" height="1.2" fill="#2196f3" opacity="0.55"/><rect x="57" y="3" width="17" height="14.1" rx="2" fill="none" stroke="#2196f3" stroke-width="2"/><path d="M63.9,6.199999999999999 L65.5,4.199999999999999 L67.1,6.199999999999999Z M63.9,14.0 L65.5,16.0 L67.1,14.0Z M60.3,8.5 L58.6,10.1 L60.3,11.7Z M70.9,8.5 L72.6,10.1 L70.9,11.7Z" fill="#2196f3"/></svg><svg class="ch" width="1319" height="772" viewBox="0 0 1319 772"><line x1="979.3" y1="184.60" x2="1226.8" y2="184.60" stroke="#e4e4e4" stroke-width="2"/><line x1="979.3" y1="202.53" x2="1226.8" y2="202.53" stroke="#d4d4d4" stroke-width="1.4"/><line x1="979.3" y1="220.47" x2="1226.8" y2="220.47" stroke="#d4d4d4" stroke-width="1.4"/><line x1="979.3" y1="238.40" x2="1226.8" y2="238.40" stroke="#d4d4d4" stroke-width="1.4"/><line x1="979.3" y1="256.33" x2="1226.8" y2="256.33" stroke="#d4d4d4" stroke-width="1.4"/><line x1="979.3" y1="274.27" x2="1226.8" y2="274.27" stroke="#d4d4d4" stroke-width="1.4"/><line x1="979.3" y1="292.20" x2="1226.8" y2="292.20" stroke="#d4d4d4" stroke-width="1.4"/><line x1="979.3" y1="310.13" x2="1226.8" y2="310.13" stroke="#d4d4d4" stroke-width="1.4"/><line x1="979.3" y1="328.07" x2="1226.8" y2="328.07" stroke="#d4d4d4" stroke-width="1.4"/><line x1="979.3" y1="346.00" x2="1226.8" y2="346.00" stroke="#e4e4e4" stroke-width="2"/><line x1="984.10" y1="184.6" x2="984.10" y2="350.5" stroke="#dedede" stroke-width="2"/><line x1="1053.50" y1="184.6" x2="1053.50" y2="350.5" stroke="#c4c4c4" stroke-width="1"/><line x1="1088.50" y1="184.6" x2="1088.50" y2="350.5" stroke="#c4c4c4" stroke-width="1"/><line x1="1122.50" y1="184.6" x2="1122.50" y2="350.5" stroke="#c4c4c4" stroke-width="1"/><line x1="1157.50" y1="184.6" x2="1157.50" y2="350.5" stroke="#c4c4c4" stroke-width="1"/><line x1="1192.50" y1="184.6" x2="1192.50" y2="350.5" stroke="#c4c4c4" stroke-width="1"/><line x1="1227.00" y1="184.6" x2="1227.00" y2="350.5" stroke="#dedede" stroke-width="2"/><clipPath id="c3"><rect x="979.3" y="184.6" width="247.5" height="161.4"/></clipPath><g clip-path="url(#c3)"><path d="M1018.81,232.0h1.35V382.1h-1.35ZM1019.81,263.9h1.35V382.1h-1.35ZM1020.81,263.9h1.35V378.9h-1.35ZM1021.81,376.4h1.35V378.9h-1.35ZM1022.81,373.2h1.35V377.6h-1.35ZM1023.81,252.4h1.35V374.4h-1.35ZM1024.81,252.4h1.35V363.8h-1.35ZM1025.81,256.2h1.35V363.8h-1.35ZM1026.81,256.2h1.35V314.7h-1.35ZM1027.81,313.5h1.35V372.5h-1.35ZM1028.81,263.3h1.35V372.5h-1.35ZM1029.81,263.3h1.35V373.8h-1.35ZM1030.81,243.6h1.35V373.8h-1.35ZM1031.81,243.6h1.35V316.4h-1.35ZM1032.81,253.0h1.35V316.4h-1.35ZM1033.81,253.0h1.35V317.7h-1.35ZM1034.81,252.2h1.35V317.7h-1.35ZM1035.81,252.2h1.35V372.0h-1.35ZM1036.81,237.6h1.35V372.0h-1.35ZM1037.81,237.6h1.35V385.1h-1.35ZM1038.81,240.4h1.35V385.1h-1.35ZM1039.81,240.4h1.35V303.3h-1.35ZM1040.81,198.1h1.35V303.3h-1.35ZM1041.81,198.1h1.35V317.0h-1.35ZM1042.81,203.6h1.35V317.0h-1.35ZM1043.81,203.6h1.35V287.2h-1.35ZM1044.81,128.8h1.35V287.2h-1.35ZM1045.81,128.8h1.35V305.0h-1.35ZM1046.81,129.5h1.35V305.0h-1.35ZM1047.81,129.5h1.35V314.0h-1.35ZM1048.81,245.8h1.35V314.0h-1.35ZM1049.81,245.8h1.35V303.8h-1.35ZM1050.81,111.7h1.35V303.8h-1.35ZM1051.81,111.7h1.35V313.1h-1.35ZM1052.81,296.3h1.35V313.1h-1.35ZM1053.81,104.9h1.35V297.5h-1.35ZM1054.81,104.9h1.35V291.8h-1.35ZM1055.81,113.6h1.35V291.8h-1.35ZM1056.81,113.6h1.35V269.1h-1.35ZM1057.81,267.9h1.35V291.8h-1.35ZM1058.81,104.3h1.35V291.8h-1.35ZM1059.81,104.3h1.35V291.1h-1.35ZM1060.81,129.2h1.35V291.1h-1.35ZM1061.81,129.2h1.35V257.4h-1.35ZM1062.81,151.9h1.35V257.4h-1.35ZM1063.81,151.9h1.35V309.8h-1.35ZM1064.81,128.4h1.35V309.8h-1.35ZM1065.81,128.4h1.35V282.1h-1.35ZM1066.81,142.0h1.35V282.1h-1.35ZM1067.81,142.0h1.35V260.2h-1.35ZM1068.81,128.1h1.35V260.2h-1.35ZM1069.81,128.1h1.35V251.5h-1.35ZM1070.81,199.9h1.35V251.5h-1.35ZM1071.81,199.9h1.35V285.1h-1.35ZM1072.81,138.6h1.35V285.1h-1.35ZM1073.81,138.6h1.35V253.1h-1.35ZM1074.81,137.6h1.35V253.1h-1.35ZM1075.81,137.6h1.35V257.9h-1.35ZM1076.81,125.2h1.35V257.9h-1.35ZM1077.81,125.2h1.35V243.0h-1.35ZM1078.81,241.8h1.35V286.4h-1.35ZM1079.81,285.2h1.35V306.7h-1.35ZM1080.81,167.3h1.35V306.7h-1.35ZM1081.81,167.3h1.35V279.9h-1.35ZM1082.81,124.5h1.35V279.9h-1.35ZM1083.81,124.5h1.35V285.6h-1.35ZM1084.81,160.3h1.35V285.6h-1.35ZM1085.81,160.3h1.35V297.2h-1.35ZM1086.81,283.9h1.35V297.2h-1.35ZM1087.81,154.1h1.35V285.1h-1.35ZM1088.81,154.1h1.35V280.9h-1.35ZM1089.81,212.4h1.35V280.9h-1.35ZM1090.81,212.4h1.35V247.0h-1.35ZM1091.81,197.9h1.35V247.0h-1.35ZM1092.81,197.9h1.35V233.1h-1.35ZM1093.81,156.6h1.35V233.1h-1.35ZM1094.81,156.6h1.35V269.4h-1.35ZM1095.81,268.2h1.35V273.3h-1.35ZM1096.81,137.4h1.35V273.3h-1.35ZM1097.81,137.4h1.35V148.7h-1.35ZM1098.81,147.5h1.35V285.0h-1.35ZM1099.81,135.4h1.35V285.0h-1.35ZM1100.81,135.4h1.35V279.0h-1.35ZM1101.81,139.7h1.35V279.0h-1.35ZM1102.81,139.7h1.35V166.8h-1.35ZM1103.81,165.6h1.35V287.3h-1.35ZM1104.81,140.4h1.35V287.3h-1.35ZM1105.81,140.4h1.35V167.2h-1.35ZM1106.81,166.0h1.35V280.2h-1.35ZM1107.81,171.6h1.35V280.2h-1.35ZM1108.81,171.6h1.35V264.1h-1.35ZM1109.81,163.2h1.35V264.1h-1.35ZM1110.81,163.2h1.35V271.8h-1.35ZM1111.81,181.7h1.35V271.8h-1.35ZM1112.81,181.7h1.35V282.6h-1.35ZM1113.81,163.9h1.35V282.6h-1.35ZM1114.81,163.9h1.35V267.4h-1.35ZM1115.81,152.7h1.35V267.4h-1.35ZM1116.81,152.7h1.35V281.2h-1.35ZM1117.81,167.4h1.35V281.2h-1.35ZM1118.81,167.4h1.35V265.2h-1.35ZM1119.81,185.4h1.35V265.2h-1.35ZM1120.81,185.4h1.35V268.8h-1.35ZM1121.81,169.2h1.35V268.8h-1.35ZM1122.81,169.2h1.35V239.7h-1.35ZM1123.81,151.2h1.35V239.7h-1.35ZM1124.81,151.2h1.35V183.1h-1.35ZM1125.81,181.9h1.35V268.5h-1.35ZM1126.81,173.1h1.35V268.5h-1.35ZM1127.81,173.1h1.35V253.5h-1.35ZM1128.81,199.5h1.35V253.5h-1.35ZM1129.81,199.5h1.35V258.2h-1.35ZM1130.81,149.6h1.35V258.2h-1.35ZM1131.81,149.6h1.35V254.4h-1.35ZM1132.81,177.5h1.35V254.4h-1.35ZM1133.81,177.5h1.35V270.0h-1.35ZM1134.81,160.5h1.35V270.0h-1.35ZM1135.81,160.5h1.35V267.9h-1.35ZM1136.81,179.2h1.35V267.9h-1.35ZM1137.81,179.2h1.35V258.6h-1.35ZM1138.81,177.9h1.35V258.6h-1.35ZM1139.81,177.9h1.35V182.5h-1.35ZM1140.81,181.3h1.35V277.9h-1.35ZM1141.81,156.5h1.35V277.9h-1.35ZM1142.81,156.5h1.35V176.9h-1.35ZM1143.81,175.7h1.35V276.9h-1.35ZM1144.81,185.1h1.35V276.9h-1.35ZM1145.81,185.1h1.35V275.7h-1.35ZM1146.81,182.6h1.35V275.7h-1.35ZM1147.81,182.6h1.35V263.0h-1.35ZM1148.81,160.2h1.35V263.0h-1.35ZM1149.81,160.2h1.35V279.5h-1.35ZM1150.81,156.6h1.35V279.5h-1.35ZM1151.81,156.6h1.35V261.0h-1.35ZM1152.81,195.2h1.35V261.0h-1.35ZM1153.81,195.2h1.35V268.9h-1.35ZM1154.81,176.9h1.35V268.9h-1.35ZM1155.81,176.9h1.35V208.6h-1.35ZM1156.81,207.4h1.35V263.0h-1.35ZM1157.81,193.5h1.35V263.0h-1.35ZM1158.81,182.4h1.35V194.7h-1.35ZM1159.81,182.4h1.35V263.8h-1.35ZM1160.81,179.5h1.35V263.8h-1.35ZM1161.81,179.5h1.35V257.5h-1.35ZM1162.81,178.5h1.35V257.5h-1.35ZM1163.81,178.5h1.35V256.7h-1.35ZM1164.81,177.0h1.35V256.7h-1.35ZM1165.81,177.0h1.35V265.7h-1.35ZM1166.81,183.2h1.35V265.7h-1.35ZM1167.81,183.2h1.35V266.6h-1.35ZM1168.81,185.1h1.35V266.6h-1.35ZM1169.81,185.1h1.35V242.7h-1.35ZM1170.81,180.7h1.35V242.7h-1.35ZM1171.81,180.7h1.35V260.5h-1.35ZM1172.81,184.6h1.35V260.5h-1.35ZM1173.81,184.6h1.35V278.8h-1.35ZM1174.81,175.5h1.35V278.8h-1.35ZM1175.81,175.5h1.35V265.1h-1.35ZM1176.81,196.1h1.35V265.1h-1.35ZM1177.81,179.4h1.35V197.3h-1.35ZM1178.81,179.4h1.35V275.6h-1.35ZM1179.81,154.5h1.35V275.6h-1.35ZM1180.81,154.5h1.35V277.5h-1.35ZM1181.81,184.0h1.35V277.5h-1.35ZM1182.81,184.0h1.35V252.8h-1.35ZM1183.81,184.9h1.35V252.8h-1.35ZM1184.81,184.9h1.35V254.8h-1.35ZM1185.81,251.6h1.35V254.8h-1.35ZM1186.81,251.6h1.35V258.2h-1.35ZM1187.81,181.7h1.35V258.2h-1.35ZM1188.81,181.7h1.35V234.3h-1.35ZM1189.81,185.1h1.35V234.3h-1.35ZM1190.81,185.1h1.35V269.6h-1.35ZM1191.81,249.6h1.35V269.6h-1.35ZM1192.81,184.9h1.35V250.8h-1.35ZM1193.81,184.9h1.35V264.5h-1.35ZM1194.81,212.4h1.35V264.5h-1.35ZM1195.81,161.1h1.35V213.6h-1.35ZM1196.81,161.1h1.35V274.6h-1.35ZM1197.81,171.0h1.35V274.6h-1.35ZM1198.81,171.0h1.35V233.6h-1.35ZM1199.81,179.3h1.35V233.6h-1.35ZM1200.81,179.3h1.35V261.0h-1.35ZM1201.81,172.1h1.35V261.0h-1.35ZM1202.81,172.1h1.35V255.3h-1.35ZM1203.81,206.8h1.35V255.3h-1.35ZM1204.81,206.8h1.35V276.5h-1.35ZM1205.81,184.7h1.35V276.5h-1.35ZM1206.81,184.7h1.35V263.1h-1.35ZM1207.81,212.8h1.35V263.1h-1.35ZM1208.81,178.9h1.35V214.0h-1.35ZM1209.81,178.9h1.35V266.2h-1.35ZM1210.81,185.7h1.35V266.2h-1.35ZM1211.81,185.7h1.35V277.1h-1.35ZM1212.81,250.9h1.35V277.1h-1.35Z" fill="#ff7043" fill-opacity="0.2"/><line x1="1018.80" y1="184.6" x2="1018.80" y2="350.5" stroke="#9a9a9a" stroke-width="2"/><path d="M1018.81,345.07 L1019.31,308.53 L1019.81,301.08 L1020.31,311.30 L1020.81,322.51 L1021.31,323.93 L1021.81,319.70 L1022.31,317.21 L1022.81,315.43 L1023.31,311.97 L1023.81,310.90 L1024.31,312.77 L1024.81,310.88 L1025.31,311.93 L1025.81,311.76 L1026.31,311.27 L1026.81,312.29 L1027.31,310.36 L1027.81,311.22 L1028.31,309.97 L1028.81,311.80 L1029.31,309.79 L1029.81,310.51 L1030.31,311.12 L1030.81,311.11 L1031.31,309.18 L1031.81,310.85 L1032.31,310.55 L1032.81,309.05 L1033.31,309.78 L1033.81,308.28 L1034.31,307.82 L1034.81,307.56 L1035.31,307.61 L1035.81,308.51 L1036.31,307.39 L1036.81,308.32 L1037.31,307.81 L1037.81,305.95 L1038.31,306.18 L1038.81,305.05 L1039.31,305.96 L1039.81,305.46 L1040.31,303.40 L1040.81,300.26 L1041.31,299.46 L1041.81,296.31 L1042.31,295.99 L1042.81,293.12 L1043.31,290.28 L1043.81,290.31 L1044.31,288.23 L1044.81,284.82 L1045.31,284.34 L1045.81,281.86 L1046.31,281.43 L1046.81,280.52 L1047.31,280.02 L1047.81,277.36 L1048.31,276.29 L1048.81,275.55 L1049.31,275.09 L1049.81,275.03 L1050.31,273.87 L1050.81,271.45 L1051.31,271.89 L1051.81,269.64 L1052.31,268.57 L1052.81,268.98 L1053.31,269.32 L1053.81,268.66 L1054.31,266.94 L1054.81,267.12 L1055.31,265.08 L1055.81,264.35 L1056.31,265.53 L1056.81,264.22 L1057.31,262.43 L1057.81,262.16 L1058.31,262.51 L1058.81,260.21 L1059.31,259.86 L1059.81,260.63 L1060.31,258.67 L1060.81,258.44 L1061.31,257.82 L1061.81,257.28 L1062.31,256.24 L1062.81,255.45 L1063.31,255.84 L1063.81,254.85 L1064.31,254.38 L1064.81,251.40 L1065.31,250.77 L1065.81,251.46 L1066.31,249.32 L1066.81,249.53 L1067.31,247.50 L1067.81,246.81 L1068.31,246.54 L1068.81,245.08 L1069.31,244.41 L1069.81,242.39 L1070.31,243.37 L1070.81,241.93 L1071.31,240.19 L1071.81,239.79 L1072.31,239.27 L1072.81,239.05 L1073.31,236.05 L1073.81,237.23 L1074.31,236.22 L1074.81,234.82 L1075.31,235.41 L1075.81,236.09 L1076.31,234.53 L1076.81,235.47 L1077.31,235.26 L1077.81,235.14 L1078.31,233.73 L1078.81,233.57 L1079.31,235.59 L1079.81,233.60 L1080.31,233.50 L1080.81,234.23 L1081.31,232.81 L1081.81,234.31 L1082.31,234.23 L1082.81,233.09 L1083.31,233.56 L1083.81,233.13 L1084.31,233.45 L1084.81,232.13 L1085.31,231.42 L1085.81,231.17 L1086.31,232.70 L1086.81,232.42 L1087.31,230.36 L1087.81,231.03 L1088.31,229.49 L1088.81,229.93 L1089.31,229.05 L1089.81,229.04 L1090.31,229.45 L1090.81,228.96 L1091.31,228.70 L1091.81,228.06 L1092.31,226.85 L1092.81,225.81 L1093.31,226.86 L1093.81,226.04 L1094.31,224.48 L1094.81,224.66 L1095.31,223.47 L1095.81,224.74 L1096.31,224.92 L1096.81,222.64 L1097.31,223.92 L1097.81,224.38 L1098.31,224.22 L1098.81,223.69 L1099.31,222.14 L1099.81,223.01 L1100.31,222.35 L1100.81,222.75 L1101.31,222.09 L1101.81,221.60 L1102.31,222.34 L1102.81,221.08 L1103.31,220.97 L1103.81,221.94 L1104.31,222.07 L1104.81,220.49 L1105.31,220.22 L1105.81,220.90 L1106.31,219.98 L1106.81,221.79 L1107.31,219.94 L1107.81,218.89 L1108.31,219.57 L1108.81,219.30 L1109.31,218.65 L1109.81,218.58 L1110.31,217.03 L1110.81,216.82 L1111.31,217.43 L1111.81,215.74 L1112.31,216.27 L1112.81,215.41 L1113.31,216.20 L1113.81,215.26 L1114.31,215.04 L1114.81,213.94 L1115.31,213.99 L1115.81,213.54 L1116.31,213.15 L1116.81,213.06 L1117.31,212.40 L1117.81,212.60 L1118.31,211.69 L1118.81,211.18 L1119.31,210.69 L1119.81,210.67 L1120.31,210.47 L1120.81,210.56 L1121.31,211.90 L1121.81,211.72 L1122.31,210.85 L1122.81,212.01 L1123.31,210.57 L1123.81,210.86 L1124.31,211.47 L1124.81,210.25 L1125.31,210.69 L1125.81,210.34 L1126.31,211.19 L1126.81,209.90 L1127.31,210.42 L1127.81,211.02 L1128.31,210.89 L1128.81,211.42 L1129.31,210.10 L1129.81,210.40 L1130.31,209.47 L1130.81,209.69 L1131.31,210.61 L1131.81,210.97 L1132.31,209.61 L1132.81,208.90 L1133.31,210.15 L1133.81,208.71 L1134.31,209.07 L1134.81,208.52 L1135.31,209.79 L1135.81,210.04 L1136.31,208.50 L1136.81,209.82 L1137.31,208.83 L1137.81,209.01 L1138.31,209.25 L1138.81,209.05 L1139.31,209.13 L1139.81,208.52 L1140.31,208.82 L1140.81,209.69 L1141.31,208.06 L1141.81,208.61 L1142.31,208.03 L1142.81,208.17 L1143.31,207.80 L1143.81,209.11 L1144.31,208.27 L1144.81,207.23 L1145.31,208.95 L1145.81,208.03 L1146.31,207.37 L1146.81,208.24 L1147.31,207.16 L1147.81,208.02 L1148.31,208.34 L1148.81,207.55 L1149.31,207.26 L1149.81,207.43 L1150.31,206.79 L1150.81,207.94 L1151.31,207.04 L1151.81,206.72 L1152.31,208.16 L1152.81,208.08 L1153.31,206.45 L1153.81,207.45 L1154.31,206.27 L1154.81,206.45 L1155.31,206.66 L1155.81,205.85 L1156.31,205.64 L1156.81,207.42 L1157.31,206.30 L1157.81,206.18 L1158.31,205.71 L1158.81,207.27 L1159.31,207.03 L1159.81,205.33 L1160.31,207.17 L1160.81,205.52 L1161.31,205.04 L1161.81,205.73 L1162.31,206.24 L1162.81,204.75 L1163.31,205.12 L1163.81,205.11 L1164.31,205.53 L1164.81,204.91 L1165.31,205.97 L1165.81,206.10 L1166.31,206.00 L1166.81,204.52 L1167.31,205.84 L1167.81,206.87 L1168.31,206.30 L1168.81,206.62 L1169.31,207.59 L1169.81,207.59 L1170.31,206.54 L1170.81,206.75 L1171.31,208.68 L1171.81,207.59 L1172.31,208.38 L1172.81,208.91 L1173.31,208.49 L1173.81,209.17 L1174.31,210.09 L1174.81,209.70 L1175.31,209.61 L1175.81,208.98 L1176.31,209.81 L1176.81,208.62 L1177.31,210.01 L1177.81,209.66 L1178.31,209.74 L1178.81,208.99 L1179.31,209.67 L1179.81,207.94 L1180.31,209.45 L1180.81,209.22 L1181.31,208.55 L1181.81,207.04 L1182.31,207.40 L1182.81,207.17 L1183.31,207.87 L1183.81,207.56 L1184.31,208.28 L1184.81,207.86 L1185.31,207.71 L1185.81,207.33 L1186.31,208.53 L1186.81,208.24 L1187.31,208.49 L1187.81,208.49 L1188.31,207.65 L1188.81,207.84 L1189.31,208.15 L1189.81,210.04 L1190.31,209.28 L1190.81,208.76 L1191.31,209.25 L1191.81,209.06 L1192.31,208.75 L1192.81,210.88 L1193.31,209.87 L1193.81,210.73 L1194.31,210.24 L1194.81,208.74 L1195.31,209.63 L1195.81,209.50 L1196.31,210.03 L1196.81,210.53 L1197.31,209.57 L1197.81,209.62 L1198.31,210.60 L1198.81,210.01 L1199.31,209.52 L1199.81,208.58 L1200.31,210.81 L1200.81,209.66 L1201.31,210.24 L1201.81,210.41 L1202.31,208.91 L1202.81,208.80 L1203.31,210.04 L1203.81,210.59 L1204.31,209.77 L1204.81,208.95 L1205.31,209.37 L1205.81,209.00 L1206.31,209.13 L1206.81,209.70 L1207.31,209.76 L1207.81,209.79 L1208.31,210.69 L1208.81,209.97 L1209.31,209.94 L1209.81,209.48 L1210.31,209.21 L1210.81,209.76 L1211.31,210.48 L1211.81,210.06 L1212.31,210.29 L1212.81,211.05 L1213.31,209.54 L1213.81,210.82 L1214.31,211.26 L1214.36,210.39" fill="none" stroke="#ff7043" stroke-width="2.1" stroke-linejoin="round"/></g><line x1="1018.80" y1="346" x2="1018.80" y2="350.5" stroke="#c4c4c4" stroke-width="1.5"/><circle cx="1214.36" cy="210.39" r="3.7" fill="#ff7043"/></svg><div class="yl" style="right:344.20px;top:215.38px">0.940</div><div class="yl" style="right:344.20px;top:251.25px">0.920</div><div class="yl" style="right:344.20px;top:287.11px">0.900</div><div class="yl" style="right:344.20px;top:322.98px">0.880</div><div class="xl" style="left:978.80px;top:354.11px">0.000</div><div class="xl" style="left:1048.20px;top:354.11px">1.000k</div><div class="xl" style="left:1117.60px;top:354.11px">2.000k</div><div class="t" style="left:930.40px;top:162.10px;font-size:13px;line-height:13px;color:#212121;font-weight:400;">Test/f1</div><svg class="ic" style="left:935.90px;top:369.80px" width="80" height="22" viewBox="0 0 80 22"><path d="M3,8.6 V4.6 H7 M9.5,4.6 H13.5 V8.6 M13.5,11.600000000000001 V15.600000000000001 H9.5 M7,15.600000000000001 H3 V11.600000000000001" fill="none" stroke="#2196f3" stroke-width="2"/><rect x="29.2" y="3.1" width="16.2" height="3" fill="#2196f3"/><rect x="29.2" y="8.4" width="16.2" height="2.6" fill="#2196f3"/><rect x="29.2" y="13.2" width="16.2" height="1.6" fill="#2196f3"/><rect x="29.2" y="16.3" width="16.2" height="1.2" fill="#2196f3" opacity="0.55"/><rect x="57" y="3" width="17" height="14.1" rx="2" fill="none" stroke="#2196f3" stroke-width="2"/><path d="M63.9,6.199999999999999 L65.5,4.199999999999999 L67.1,6.199999999999999Z M63.9,14.0 L65.5,16.0 L67.1,14.0Z M60.3,8.5 L58.6,10.1 L60.3,11.7Z M70.9,8.5 L72.6,10.1 L70.9,11.7Z" fill="#2196f3"/></svg><svg class="ch" width="1319" height="772" viewBox="0 0 1319 772"><line x1="367.3" y1="487.00" x2="614.8" y2="487.00" stroke="#e4e4e4" stroke-width="2"/><line x1="367.3" y1="499.38" x2="614.8" y2="499.38" stroke="#d4d4d4" stroke-width="1.4"/><line x1="367.3" y1="511.77" x2="614.8" y2="511.77" stroke="#d4d4d4" stroke-width="1.4"/><line x1="367.3" y1="524.15" x2="614.8" y2="524.15" stroke="#d4d4d4" stroke-width="1.4"/><line x1="367.3" y1="536.54" x2="614.8" y2="536.54" stroke="#d4d4d4" stroke-width="1.4"/><line x1="367.3" y1="548.92" x2="614.8" y2="548.92" stroke="#d4d4d4" stroke-width="1.4"/><line x1="367.3" y1="561.31" x2="614.8" y2="561.31" stroke="#d4d4d4" stroke-width="1.4"/><line x1="367.3" y1="573.69" x2="614.8" y2="573.69" stroke="#d4d4d4" stroke-width="1.4"/><line x1="367.3" y1="586.08" x2="614.8" y2="586.08" stroke="#d4d4d4" stroke-width="1.4"/><line x1="367.3" y1="598.46" x2="614.8" y2="598.46" stroke="#d4d4d4" stroke-width="1.4"/><line x1="367.3" y1="610.85" x2="614.8" y2="610.85" stroke="#d4d4d4" stroke-width="1.4"/><line x1="367.3" y1="623.23" x2="614.8" y2="623.23" stroke="#d4d4d4" stroke-width="1.4"/><line x1="367.3" y1="635.62" x2="614.8" y2="635.62" stroke="#d4d4d4" stroke-width="1.4"/><line x1="367.3" y1="648.00" x2="614.8" y2="648.00" stroke="#e4e4e4" stroke-width="2"/><line x1="372.17" y1="487" x2="372.17" y2="652.5" stroke="#dedede" stroke-width="2"/><line x1="406.50" y1="487" x2="406.50" y2="652.5" stroke="#c4c4c4" stroke-width="1"/><line x1="424.50" y1="487" x2="424.50" y2="652.5" stroke="#c4c4c4" stroke-width="1"/><line x1="441.50" y1="487" x2="441.50" y2="652.5" stroke="#c4c4c4" stroke-width="1"/><line x1="458.50" y1="487" x2="458.50" y2="652.5" stroke="#c4c4c4" stroke-width="1"/><line x1="476.50" y1="487" x2="476.50" y2="652.5" stroke="#c4c4c4" stroke-width="1"/><line x1="493.50" y1="487" x2="493.50" y2="652.5" stroke="#c4c4c4" stroke-width="1"/><line x1="510.50" y1="487" x2="510.50" y2="652.5" stroke="#c4c4c4" stroke-width="1"/><line x1="528.50" y1="487" x2="528.50" y2="652.5" stroke="#c4c4c4" stroke-width="1"/><line x1="545.50" y1="487" x2="545.50" y2="652.5" stroke="#c4c4c4" stroke-width="1"/><line x1="562.50" y1="487" x2="562.50" y2="652.5" stroke="#c4c4c4" stroke-width="1"/><line x1="580.50" y1="487" x2="580.50" y2="652.5" stroke="#c4c4c4" stroke-width="1"/><line x1="597.50" y1="487" x2="597.50" y2="652.5" stroke="#c4c4c4" stroke-width="1"/><line x1="614.79" y1="487" x2="614.79" y2="652.5" stroke="#dedede" stroke-width="2"/><clipPath id="c4"><rect x="367.3" y="487" width="247.49999999999994" height="161"/></clipPath><g clip-path="url(#c4)"><path d="M389.85,582.4h0.95V674.8h-0.95ZM390.45,587.0h0.95V674.8h-0.95ZM391.05,587.0h0.95V673.7h-0.95ZM391.65,583.6h0.95V673.7h-0.95ZM392.25,583.6h0.95V671.4h-0.95ZM392.85,592.5h0.95V671.4h-0.95ZM393.45,592.5h0.95V690.9h-0.95ZM394.05,584.1h0.95V690.9h-0.95ZM394.65,584.1h0.95V680.3h-0.95ZM395.25,584.9h0.95V680.3h-0.95ZM395.85,584.9h0.95V684.7h-0.95ZM396.45,586.8h0.95V684.7h-0.95ZM397.05,586.8h0.95V669.6h-0.95ZM397.65,587.5h0.95V669.6h-0.95ZM398.25,587.5h0.95V663.8h-0.95ZM398.85,586.9h0.95V663.8h-0.95ZM399.45,586.9h0.95V672.2h-0.95ZM400.05,585.2h0.95V672.2h-0.95ZM400.65,585.2h0.95V669.5h-0.95ZM401.25,590.3h0.95V669.5h-0.95ZM401.85,590.3h0.95V677.3h-0.95ZM402.45,593.4h0.95V677.3h-0.95ZM403.05,593.4h0.95V683.5h-0.95ZM403.65,581.5h0.95V683.5h-0.95ZM404.25,581.5h0.95V664.7h-0.95ZM404.85,587.1h0.95V664.7h-0.95ZM405.45,587.1h0.95V669.3h-0.95ZM406.05,585.3h0.95V669.3h-0.95ZM406.65,585.3h0.95V664.3h-0.95ZM407.25,585.0h0.95V664.3h-0.95ZM407.85,585.0h0.95V667.4h-0.95ZM408.45,583.6h0.95V667.4h-0.95ZM409.05,583.6h0.95V661.6h-0.95ZM409.65,587.2h0.95V661.6h-0.95ZM410.25,587.2h0.95V684.2h-0.95ZM410.85,579.2h0.95V684.2h-0.95ZM411.45,579.2h0.95V681.6h-0.95ZM412.05,580.9h0.95V681.6h-0.95ZM412.65,580.9h0.95V673.6h-0.95ZM413.25,550.9h0.95V673.6h-0.95ZM413.85,550.9h0.95V643.7h-0.95ZM414.45,554.9h0.95V643.7h-0.95ZM415.05,554.9h0.95V630.7h-0.95ZM415.65,561.3h0.95V630.7h-0.95ZM416.25,561.3h0.95V649.3h-0.95ZM416.85,564.4h0.95V649.3h-0.95ZM417.45,564.4h0.95V631.6h-0.95ZM418.05,548.4h0.95V631.6h-0.95ZM418.65,548.4h0.95V634.0h-0.95ZM419.25,550.9h0.95V634.0h-0.95ZM419.85,550.9h0.95V627.6h-0.95ZM420.45,559.1h0.95V627.6h-0.95ZM421.05,559.1h0.95V626.6h-0.95ZM421.65,544.4h0.95V626.6h-0.95ZM422.25,544.4h0.95V624.0h-0.95ZM422.85,605.3h0.95V624.0h-0.95ZM423.45,605.3h0.95V627.5h-0.95ZM424.05,537.6h0.95V627.5h-0.95ZM424.65,537.6h0.95V619.4h-0.95ZM425.25,544.9h0.95V619.4h-0.95ZM425.85,544.9h0.95V611.4h-0.95ZM426.45,535.5h0.95V611.4h-0.95ZM427.05,535.5h0.95V626.1h-0.95ZM427.65,539.8h0.95V626.1h-0.95ZM428.25,539.8h0.95V620.3h-0.95ZM428.85,520.0h0.95V620.3h-0.95ZM429.45,520.0h0.95V599.6h-0.95ZM430.05,525.7h0.95V599.6h-0.95ZM430.65,525.7h0.95V621.5h-0.95ZM431.25,544.2h0.95V621.5h-0.95ZM431.85,544.2h0.95V613.0h-0.95ZM432.45,521.5h0.95V613.0h-0.95ZM433.05,521.5h0.95V608.4h-0.95ZM433.65,538.2h0.95V608.4h-0.95ZM434.25,538.2h0.95V593.1h-0.95ZM434.85,540.1h0.95V593.1h-0.95ZM435.45,540.1h0.95V620.0h-0.95ZM436.05,528.8h0.95V620.0h-0.95ZM436.65,528.8h0.95V590.2h-0.95ZM437.25,541.4h0.95V590.2h-0.95ZM437.85,541.4h0.95V589.3h-0.95ZM438.45,526.1h0.95V589.3h-0.95ZM439.05,526.1h0.95V617.1h-0.95ZM439.65,584.6h0.95V617.1h-0.95ZM440.25,584.6h0.95V588.9h-0.95ZM440.85,528.7h0.95V588.9h-0.95ZM441.45,528.7h0.95V588.5h-0.95ZM442.05,517.4h0.95V588.5h-0.95ZM442.65,517.4h0.95V589.1h-0.95ZM443.25,586.3h0.95V589.1h-0.95ZM443.85,536.9h0.95V587.5h-0.95ZM444.45,536.9h0.95V595.6h-0.95ZM445.05,538.3h0.95V595.6h-0.95ZM445.65,538.3h0.95V586.5h-0.95ZM446.25,544.1h0.95V586.5h-0.95ZM446.85,544.1h0.95V580.1h-0.95ZM447.45,532.8h0.95V580.1h-0.95ZM448.05,532.8h0.95V589.1h-0.95ZM448.65,531.1h0.95V589.1h-0.95ZM449.25,531.1h0.95V589.0h-0.95ZM449.85,529.3h0.95V589.0h-0.95ZM450.45,519.2h0.95V530.5h-0.95ZM451.05,519.2h0.95V588.6h-0.95ZM451.65,524.9h0.95V588.6h-0.95ZM452.25,524.9h0.95V615.9h-0.95ZM452.85,525.1h0.95V615.9h-0.95ZM453.45,525.1h0.95V616.3h-0.95ZM454.05,533.8h0.95V616.3h-0.95ZM454.65,533.8h0.95V588.1h-0.95ZM455.25,529.7h0.95V588.1h-0.95ZM455.85,529.7h0.95V584.9h-0.95ZM456.45,531.5h0.95V584.9h-0.95ZM457.05,531.5h0.95V589.0h-0.95ZM457.65,516.1h0.95V589.0h-0.95ZM458.25,516.1h0.95V575.1h-0.95ZM458.85,525.2h0.95V575.1h-0.95ZM459.45,525.2h0.95V582.5h-0.95ZM460.05,528.1h0.95V582.5h-0.95ZM460.65,528.1h0.95V585.5h-0.95ZM461.25,519.2h0.95V585.5h-0.95ZM461.85,519.2h0.95V603.7h-0.95ZM462.45,523.6h0.95V603.7h-0.95ZM463.05,523.6h0.95V567.4h-0.95ZM463.65,519.6h0.95V567.4h-0.95ZM464.25,519.6h0.95V591.9h-0.95ZM464.85,515.5h0.95V591.9h-0.95ZM465.45,515.5h0.95V579.5h-0.95ZM466.05,526.4h0.95V579.5h-0.95ZM466.65,526.4h0.95V566.2h-0.95ZM467.25,516.3h0.95V566.2h-0.95ZM467.85,516.3h0.95V593.9h-0.95ZM468.45,517.4h0.95V593.9h-0.95ZM469.05,517.4h0.95V571.2h-0.95ZM469.65,505.7h0.95V571.2h-0.95ZM470.25,505.7h0.95V572.4h-0.95ZM470.85,507.8h0.95V572.4h-0.95ZM471.45,507.8h0.95V573.7h-0.95ZM472.05,516.2h0.95V573.7h-0.95ZM472.65,516.2h0.95V565.3h-0.95ZM473.25,503.0h0.95V565.3h-0.95ZM473.85,503.0h0.95V573.2h-0.95ZM474.45,513.1h0.95V573.2h-0.95ZM475.05,513.1h0.95V580.8h-0.95ZM475.65,522.8h0.95V580.8h-0.95ZM476.25,522.8h0.95V580.2h-0.95ZM476.85,505.7h0.95V580.2h-0.95ZM477.45,505.7h0.95V564.7h-0.95ZM478.05,507.0h0.95V564.7h-0.95ZM478.65,507.0h0.95V570.2h-0.95ZM479.25,505.6h0.95V570.2h-0.95ZM479.85,505.6h0.95V564.6h-0.95ZM480.45,512.5h0.95V564.6h-0.95ZM481.05,512.5h0.95V565.9h-0.95ZM481.65,520.2h0.95V565.9h-0.95ZM482.25,520.2h0.95V565.3h-0.95ZM482.85,514.5h0.95V565.3h-0.95ZM483.45,514.5h0.95V561.8h-0.95ZM484.05,505.4h0.95V561.8h-0.95ZM484.65,505.4h0.95V562.9h-0.95ZM485.25,511.8h0.95V562.9h-0.95ZM485.85,511.8h0.95V563.9h-0.95ZM486.45,502.4h0.95V563.9h-0.95ZM487.05,502.4h0.95V565.2h-0.95ZM487.65,513.5h0.95V565.2h-0.95ZM488.25,513.5h0.95V564.0h-0.95ZM488.85,511.2h0.95V564.0h-0.95ZM489.45,511.2h0.95V560.2h-0.95ZM490.05,514.1h0.95V560.2h-0.95ZM490.65,514.1h0.95V565.5h-0.95ZM491.25,514.1h0.95V565.5h-0.95ZM491.85,514.1h0.95V573.7h-0.95ZM492.45,519.3h0.95V573.7h-0.95ZM493.05,519.3h0.95V545.2h-0.95ZM493.65,499.6h0.95V545.2h-0.95ZM494.25,499.6h0.95V570.8h-0.95ZM494.85,514.5h0.95V570.8h-0.95ZM495.45,514.5h0.95V560.6h-0.95ZM496.05,518.0h0.95V560.6h-0.95ZM496.65,518.0h0.95V564.9h-0.95ZM497.25,505.2h0.95V564.9h-0.95ZM497.85,505.2h0.95V554.6h-0.95ZM498.45,498.6h0.95V554.6h-0.95ZM499.05,498.6h0.95V555.4h-0.95ZM499.65,502.7h0.95V555.4h-0.95ZM500.25,502.7h0.95V552.9h-0.95ZM500.85,551.3h0.95V552.9h-0.95ZM501.45,507.2h0.95V552.5h-0.95ZM502.05,507.2h0.95V552.4h-0.95ZM502.65,514.1h0.95V552.4h-0.95ZM503.25,514.1h0.95V551.6h-0.95ZM503.85,498.7h0.95V551.6h-0.95ZM504.45,498.7h0.95V508.8h-0.95ZM505.05,507.6h0.95V565.1h-0.95ZM505.65,497.5h0.95V565.1h-0.95ZM506.25,497.5h0.95V550.3h-0.95ZM506.85,504.5h0.95V550.3h-0.95ZM507.45,504.5h0.95V552.3h-0.95ZM508.05,498.1h0.95V552.3h-0.95ZM508.65,498.1h0.95V507.8h-0.95ZM509.25,506.6h0.95V561.7h-0.95ZM509.85,508.3h0.95V561.7h-0.95ZM510.45,508.3h0.95V562.4h-0.95ZM511.05,509.9h0.95V562.4h-0.95ZM511.65,509.9h0.95V550.0h-0.95ZM512.25,499.9h0.95V550.0h-0.95ZM512.85,499.8h0.95V501.1h-0.95ZM513.45,499.8h0.95V548.8h-0.95ZM514.05,498.7h0.95V548.8h-0.95ZM514.65,498.7h0.95V562.4h-0.95ZM515.25,496.2h0.95V562.4h-0.95ZM515.85,496.2h0.95V539.9h-0.95ZM516.45,498.7h0.95V539.9h-0.95ZM517.05,498.7h0.95V550.8h-0.95ZM517.65,508.2h0.95V550.8h-0.95ZM518.25,508.2h0.95V548.3h-0.95ZM518.85,495.4h0.95V548.3h-0.95ZM519.45,495.4h0.95V551.1h-0.95ZM520.05,513.1h0.95V551.1h-0.95ZM520.65,513.1h0.95V549.6h-0.95ZM521.25,498.8h0.95V549.6h-0.95ZM521.85,498.8h0.95V552.1h-0.95ZM522.45,548.3h0.95V552.1h-0.95ZM523.05,497.9h0.95V549.5h-0.95ZM523.65,497.9h0.95V560.1h-0.95ZM524.25,502.1h0.95V560.1h-0.95ZM524.85,502.1h0.95V555.4h-0.95ZM525.45,509.3h0.95V555.4h-0.95ZM526.05,509.3h0.95V554.1h-0.95ZM526.65,520.5h0.95V554.1h-0.95ZM527.25,520.5h0.95V562.4h-0.95ZM527.85,498.8h0.95V562.4h-0.95ZM528.45,498.8h0.95V549.5h-0.95ZM529.05,509.2h0.95V549.5h-0.95ZM529.65,509.2h0.95V547.4h-0.95ZM530.25,497.2h0.95V547.4h-0.95ZM530.85,497.2h0.95V550.3h-0.95ZM531.45,509.0h0.95V550.3h-0.95ZM532.05,509.0h0.95V561.0h-0.95ZM532.65,498.4h0.95V561.0h-0.95ZM533.25,498.4h0.95V557.2h-0.95ZM533.85,511.7h0.95V557.2h-0.95ZM534.45,511.7h0.95V549.0h-0.95ZM535.05,547.8h0.95V552.7h-0.95ZM535.65,508.4h0.95V552.7h-0.95ZM536.25,508.4h0.95V550.6h-0.95ZM536.85,509.0h0.95V550.6h-0.95ZM537.45,509.0h0.95V548.9h-0.95ZM538.05,493.5h0.95V548.9h-0.95ZM538.65,493.5h0.95V565.3h-0.95ZM539.25,506.1h0.95V565.3h-0.95ZM539.85,495.5h0.95V507.3h-0.95ZM540.45,495.5h0.95V553.5h-0.95ZM541.05,507.2h0.95V553.5h-0.95ZM541.65,507.2h0.95V556.0h-0.95ZM542.25,498.8h0.95V556.0h-0.95ZM542.85,498.8h0.95V548.4h-0.95ZM543.45,508.7h0.95V548.4h-0.95ZM544.05,508.7h0.95V549.9h-0.95ZM544.65,494.9h0.95V549.9h-0.95ZM545.25,494.9h0.95V554.1h-0.95ZM545.85,495.0h0.95V554.1h-0.95ZM546.45,495.0h0.95V550.5h-0.95ZM547.05,503.4h0.95V550.5h-0.95ZM547.65,503.4h0.95V555.0h-0.95ZM548.25,505.0h0.95V555.0h-0.95ZM548.85,505.0h0.95V558.6h-0.95ZM549.45,557.4h0.95V567.0h-0.95ZM550.05,506.7h0.95V567.0h-0.95ZM550.65,506.7h0.95V551.9h-0.95ZM551.25,507.5h0.95V551.9h-0.95ZM551.85,507.5h0.95V547.9h-0.95ZM552.45,505.3h0.95V547.9h-0.95ZM553.05,505.3h0.95V506.9h-0.95ZM553.65,505.7h0.95V566.5h-0.95ZM554.25,502.2h0.95V566.5h-0.95ZM554.85,502.2h0.95V553.5h-0.95ZM555.45,505.1h0.95V553.5h-0.95ZM556.05,505.1h0.95V550.1h-0.95ZM556.65,494.4h0.95V550.1h-0.95ZM557.25,494.4h0.95V554.0h-0.95ZM557.85,496.2h0.95V554.0h-0.95ZM558.45,496.2h0.95V553.6h-0.95ZM559.05,501.3h0.95V553.6h-0.95ZM559.65,501.3h0.95V548.9h-0.95ZM560.25,492.8h0.95V548.9h-0.95ZM560.85,492.8h0.95V496.0h-0.95ZM561.45,494.8h0.95V543.7h-0.95ZM562.05,495.1h0.95V543.7h-0.95ZM562.65,495.1h0.95V540.8h-0.95ZM563.25,489.9h0.95V540.8h-0.95ZM563.85,489.9h0.95V541.1h-0.95ZM564.45,489.9h0.95V541.1h-0.95ZM565.05,489.9h0.95V533.4h-0.95ZM565.65,497.1h0.95V533.4h-0.95ZM566.25,497.1h0.95V532.0h-0.95ZM566.85,497.6h0.95V532.0h-0.95ZM567.45,497.6h0.95V534.4h-0.95ZM568.05,491.8h0.95V534.4h-0.95ZM568.65,491.8h0.95V531.4h-0.95ZM569.25,501.8h0.95V531.4h-0.95ZM569.85,501.8h0.95V533.1h-0.95ZM570.45,492.8h0.95V533.1h-0.95ZM571.05,492.8h0.95V531.9h-0.95ZM571.65,499.9h0.95V531.9h-0.95ZM572.25,499.9h0.95V534.2h-0.95ZM572.85,508.2h0.95V534.2h-0.95ZM573.45,508.2h0.95V537.7h-0.95ZM574.05,500.8h0.95V537.7h-0.95ZM574.65,500.8h0.95V540.6h-0.95ZM575.25,495.7h0.95V540.6h-0.95ZM575.85,495.7h0.95V531.4h-0.95ZM576.45,493.8h0.95V531.4h-0.95ZM577.05,493.8h0.95V538.1h-0.95ZM577.65,497.2h0.95V538.1h-0.95ZM578.25,497.2h0.95V533.8h-0.95ZM578.85,496.3h0.95V533.8h-0.95ZM579.45,496.3h0.95V533.0h-0.95ZM580.05,531.8h0.95V534.2h-0.95ZM580.65,487.4h0.95V534.2h-0.95ZM581.25,487.4h0.95V531.7h-0.95ZM581.85,518.8h0.95V531.7h-0.95ZM582.45,518.8h0.95V538.7h-0.95ZM583.05,493.7h0.95V538.7h-0.95ZM583.65,493.7h0.95V534.3h-0.95ZM584.25,493.9h0.95V534.3h-0.95ZM584.85,493.9h0.95V534.7h-0.95ZM585.45,490.0h0.95V534.7h-0.95ZM586.05,490.0h0.95V524.7h-0.95ZM586.65,497.1h0.95V524.7h-0.95ZM587.25,497.1h0.95V539.6h-0.95ZM587.85,494.2h0.95V539.6h-0.95ZM588.45,494.2h0.95V535.9h-0.95ZM589.05,496.0h0.95V535.9h-0.95ZM589.65,496.0h0.95V532.5h-0.95ZM590.25,493.2h0.95V532.5h-0.95ZM590.85,493.2h0.95V534.5h-0.95ZM591.45,496.2h0.95V534.5h-0.95ZM592.05,496.2h0.95V533.2h-0.95ZM592.65,500.3h0.95V533.2h-0.95ZM593.25,500.3h0.95V531.7h-0.95ZM593.85,498.4h0.95V531.7h-0.95ZM594.45,498.4h0.95V531.7h-0.95ZM595.05,500.9h0.95V531.7h-0.95ZM595.65,500.9h0.95V533.1h-0.95ZM596.25,501.1h0.95V533.1h-0.95ZM596.85,501.1h0.95V539.0h-0.95ZM597.45,499.2h0.95V539.0h-0.95ZM598.05,499.2h0.95V532.3h-0.95ZM598.65,488.8h0.95V532.3h-0.95ZM599.25,488.8h0.95V535.5h-0.95ZM599.85,501.0h0.95V535.5h-0.95ZM600.45,501.0h0.95V530.2h-0.95ZM601.05,490.4h0.95V530.2h-0.95ZM601.65,490.4h0.95V534.1h-0.95ZM602.25,499.7h0.95V534.1h-0.95ZM602.85,499.7h0.95V534.3h-0.95ZM603.45,501.9h0.95V534.3h-0.95ZM604.05,501.9h0.95V534.1h-0.95ZM604.65,495.1h0.95V534.1h-0.95ZM605.25,495.1h0.95V534.2h-0.95ZM605.85,497.9h0.95V534.2h-0.95ZM606.45,497.9h0.95V534.6h-0.95ZM607.05,488.7h0.95V534.6h-0.95ZM607.65,488.7h0.95V539.0h-0.95Z" fill="#ff7043" fill-opacity="0.2"/><line x1="389.50" y1="487" x2="389.50" y2="652.5" stroke="#9a9a9a" stroke-width="2"/><path d="M389.85,645.51 L390.35,641.49 L390.85,636.09 L391.35,632.99 L391.85,627.02 L392.35,623.14 L392.85,620.71 L393.35,619.75 L393.85,621.31 L394.35,621.02 L394.85,620.84 L395.35,621.35 L395.85,621.59 L396.35,621.40 L396.85,623.20 L397.35,622.17 L397.85,623.84 L398.35,623.75 L398.85,621.73 L399.35,622.13 L399.85,622.51 L400.35,623.16 L400.85,621.57 L401.35,622.45 L401.85,621.76 L402.35,622.59 L402.85,622.96 L403.35,622.83 L403.85,621.77 L404.35,623.33 L404.85,622.84 L405.35,624.01 L405.85,623.41 L406.35,624.67 L406.85,625.10 L407.35,624.69 L407.85,624.49 L408.35,624.28 L408.85,623.55 L409.35,622.39 L409.85,624.06 L410.35,622.66 L410.85,621.43 L411.35,622.19 L411.85,621.95 L412.35,621.25 L412.85,622.55 L413.35,620.00 L413.85,621.22 L414.35,619.81 L414.85,618.35 L415.35,618.17 L415.85,617.78 L416.35,616.41 L416.85,617.30 L417.35,616.44 L417.85,616.60 L418.35,615.71 L418.85,615.11 L419.35,615.10 L419.85,614.45 L420.35,613.28 L420.85,612.54 L421.35,612.01 L421.85,612.18 L422.35,611.93 L422.85,611.21 L423.35,610.73 L423.85,608.37 L424.35,608.77 L424.85,607.34 L425.35,607.57 L425.85,606.64 L426.35,605.68 L426.85,605.45 L427.35,603.07 L427.85,603.31 L428.35,602.07 L428.85,600.30 L429.35,601.14 L429.85,598.10 L430.35,598.12 L430.85,597.37 L431.35,596.65 L431.85,596.94 L432.35,595.35 L432.85,595.52 L433.35,593.56 L433.85,593.39 L434.35,592.02 L434.85,592.55 L435.35,591.45 L435.85,591.68 L436.35,589.54 L436.85,589.75 L437.35,590.28 L437.85,587.50 L438.35,588.40 L438.85,587.84 L439.35,587.35 L439.85,586.36 L440.35,585.63 L440.85,586.09 L441.35,583.93 L441.85,584.30 L442.35,583.61 L442.85,583.13 L443.35,581.92 L443.85,580.24 L444.35,581.36 L444.85,579.59 L445.35,580.12 L445.85,579.97 L446.35,578.86 L446.85,577.38 L447.35,577.80 L447.85,576.09 L448.35,575.31 L448.85,575.26 L449.35,574.83 L449.85,574.28 L450.35,573.35 L450.85,572.39 L451.35,572.68 L451.85,571.37 L452.35,571.67 L452.85,569.93 L453.35,569.87 L453.85,571.22 L454.35,569.37 L454.85,569.47 L455.35,568.29 L455.85,569.58 L456.35,568.23 L456.85,567.23 L457.35,567.40 L457.85,568.56 L458.35,567.81 L458.85,565.73 L459.35,567.57 L459.85,565.19 L460.35,565.79 L460.85,565.55 L461.35,565.77 L461.85,563.95 L462.35,565.14 L462.85,563.48 L463.35,564.14 L463.85,564.18 L464.35,563.00 L464.85,561.25 L465.35,562.38 L465.85,561.45 L466.35,561.73 L466.85,561.45 L467.35,559.49 L467.85,560.15 L468.35,559.93 L468.85,560.18 L469.35,559.06 L469.85,558.66 L470.35,558.61 L470.85,556.81 L471.35,558.02 L471.85,556.98 L472.35,556.71 L472.85,555.20 L473.35,555.70 L473.85,555.14 L474.35,554.37 L474.85,555.76 L475.35,555.24 L475.85,554.05 L476.35,552.87 L476.85,554.66 L477.35,552.37 L477.85,552.96 L478.35,552.79 L478.85,553.16 L479.35,552.40 L479.85,551.98 L480.35,551.47 L480.85,552.24 L481.35,551.58 L481.85,550.21 L482.35,550.92 L482.85,550.97 L483.35,549.61 L483.85,548.39 L484.35,548.07 L484.85,549.89 L485.35,547.90 L485.85,549.02 L486.35,547.36 L486.85,547.18 L487.35,546.79 L487.85,548.04 L488.35,546.13 L488.85,546.75 L489.35,547.28 L489.85,546.38 L490.35,544.94 L490.85,544.71 L491.35,546.33 L491.85,544.86 L492.35,544.11 L492.85,544.88 L493.35,545.22 L493.85,543.86 L494.35,543.23 L494.85,543.09 L495.35,543.51 L495.85,543.96 L496.35,542.11 L496.85,543.42 L497.35,542.99 L497.85,542.45 L498.35,541.80 L498.85,540.74 L499.35,541.58 L499.85,541.11 L500.35,541.48 L500.85,539.81 L501.35,539.80 L501.85,539.21 L502.35,540.04 L502.85,538.80 L503.35,539.64 L503.85,539.17 L504.35,538.68 L504.85,538.10 L505.35,539.53 L505.85,538.27 L506.35,537.20 L506.85,538.18 L507.35,538.48 L507.85,537.73 L508.35,538.53 L508.85,538.29 L509.35,537.81 L509.85,536.18 L510.35,536.92 L510.85,537.05 L511.35,536.14 L511.85,536.78 L512.35,537.05 L512.85,537.12 L513.35,537.02 L513.85,536.87 L514.35,535.72 L514.85,536.31 L515.35,535.94 L515.85,536.41 L516.35,534.82 L516.85,534.82 L517.35,535.95 L517.85,535.84 L518.35,534.58 L518.85,535.70 L519.35,535.60 L519.85,535.18 L520.35,534.63 L520.85,533.58 L521.35,533.86 L521.85,534.98 L522.35,535.26 L522.85,533.40 L523.35,533.00 L523.85,533.62 L524.35,534.88 L524.85,533.11 L525.35,534.66 L525.85,534.22 L526.35,534.25 L526.85,534.50 L527.35,533.67 L527.85,532.47 L528.35,532.91 L528.85,532.73 L529.35,533.25 L529.85,532.43 L530.35,533.20 L530.85,531.49 L531.35,531.83 L531.85,531.73 L532.35,531.51 L532.85,532.74 L533.35,532.93 L533.85,531.03 L534.35,531.81 L534.85,530.64 L535.35,531.09 L535.85,530.75 L536.35,531.91 L536.85,532.14 L537.35,532.05 L537.85,530.65 L538.35,530.86 L538.85,530.35 L539.35,531.22 L539.85,530.04 L540.35,531.11 L540.85,530.25 L541.35,530.26 L541.85,530.82 L542.35,530.77 L542.85,529.08 L543.35,529.96 L543.85,528.83 L544.35,528.23 L544.85,530.16 L545.35,528.65 L545.85,528.85 L546.35,529.86 L546.85,530.16 L547.35,529.10 L547.85,529.85 L548.35,529.12 L548.85,528.25 L549.35,529.48 L549.85,528.60 L550.35,528.69 L550.85,529.15 L551.35,529.69 L551.85,528.71 L552.35,528.71 L552.85,529.52 L553.35,528.84 L553.85,529.50 L554.35,529.76 L554.85,528.91 L555.35,530.27 L555.85,530.43 L556.35,528.30 L556.85,528.36 L557.35,528.46 L557.85,529.34 L558.35,528.90 L558.85,529.89 L559.35,530.27 L559.85,528.75 L560.35,528.03 L560.85,527.61 L561.35,528.90 L561.85,528.38 L562.35,528.23 L562.85,528.20 L563.35,526.65 L563.85,527.02 L564.35,525.78 L564.85,525.03 L565.35,526.00 L565.85,524.96 L566.35,525.05 L566.85,524.81 L567.35,523.76 L567.85,522.96 L568.35,524.32 L568.85,524.06 L569.35,523.76 L569.85,522.46 L570.35,522.36 L570.85,523.01 L571.35,522.41 L571.85,523.25 L572.35,522.72 L572.85,522.72 L573.35,523.45 L573.85,521.74 L574.35,521.94 L574.85,522.64 L575.35,523.38 L575.85,523.52 L576.35,523.40 L576.85,521.82 L577.35,522.08 L577.85,521.91 L578.35,521.84 L578.85,521.71 L579.35,521.64 L579.85,523.15 L580.35,522.46 L580.85,523.47 L581.35,522.66 L581.85,522.95 L582.35,523.33 L582.85,522.43 L583.35,521.65 L583.85,521.88 L584.35,521.78 L584.85,520.95 L585.35,521.67 L585.85,522.00 L586.35,520.79 L586.85,519.92 L587.35,519.91 L587.85,520.34 L588.35,519.78 L588.85,520.21 L589.35,521.19 L589.85,519.31 L590.35,519.41 L590.85,519.80 L591.35,518.62 L591.85,520.06 L592.35,520.14 L592.85,517.73 L593.35,518.42 L593.85,519.20 L594.35,517.22 L594.85,518.38 L595.35,518.88 L595.85,519.14 L596.35,517.31 L596.85,518.93 L597.35,518.09 L597.85,518.34 L598.35,517.09 L598.85,516.60 L599.35,517.51 L599.85,518.59 L600.35,516.84 L600.85,518.44 L601.35,518.36 L601.85,517.11 L602.35,516.99 L602.85,518.04 L603.35,515.85 L603.85,517.05 L604.35,516.04 L604.85,517.27 L605.35,516.62 L605.85,516.83 L606.35,516.23 L606.85,517.26 L607.35,517.08 L607.85,515.16 L608.35,516.33 L608.57,516.14" fill="none" stroke="#ff7043" stroke-width="2.1" stroke-linejoin="round"/></g><line x1="389.50" y1="648" x2="389.50" y2="652.5" stroke="#c4c4c4" stroke-width="1.5"/><circle cx="608.57" cy="516.14" r="3.7" fill="#ff7043"/></svg><div class="yl" style="right:956.20px;top:505.88px">0.960</div><div class="yl" style="right:956.20px;top:530.65px">0.920</div><div class="yl" style="right:956.20px;top:555.42px">0.880</div><div class="yl" style="right:956.20px;top:580.19px">0.840</div><div class="yl" style="right:956.20px;top:604.96px">0.800</div><div class="yl" style="right:956.20px;top:629.73px">0.760</div><div class="xl" style="left:349.50px;top:656.11px">0.000</div><div class="xl" style="left:401.49px;top:656.11px">6.000k</div><div class="xl" style="left:453.48px;top:656.11px">12.00k</div><div class="xl" style="left:505.47px;top:656.11px">18.00k</div><div class="xl" style="left:557.46px;top:656.11px">24.00k</div><div class="t" style="left:318.60px;top:464.10px;font-size:13px;line-height:13px;color:#212121;font-weight:400;">Train/Accuracy</div><svg class="ic" style="left:324.10px;top:671.80px" width="80" height="22" viewBox="0 0 80 22"><path d="M3,8.6 V4.6 H7 M9.5,4.6 H13.5 V8.6 M13.5,11.600000000000001 V15.600000000000001 H9.5 M7,15.600000000000001 H3 V11.600000000000001" fill="none" stroke="#2196f3" stroke-width="2"/><rect x="29.2" y="3.1" width="16.2" height="3" fill="#2196f3"/><rect x="29.2" y="8.4" width="16.2" height="2.6" fill="#2196f3"/><rect x="29.2" y="13.2" width="16.2" height="1.6" fill="#2196f3"/><rect x="29.2" y="16.3" width="16.2" height="1.2" fill="#2196f3" opacity="0.55"/><rect x="57" y="3" width="17" height="14.1" rx="2" fill="none" stroke="#2196f3" stroke-width="2"/><path d="M63.9,6.199999999999999 L65.5,4.199999999999999 L67.1,6.199999999999999Z M63.9,14.0 L65.5,16.0 L67.1,14.0Z M60.3,8.5 L58.6,10.1 L60.3,11.7Z M70.9,8.5 L72.6,10.1 L70.9,11.7Z" fill="#2196f3"/></svg><svg class="ch" width="1319" height="772" viewBox="0 0 1319 772"><line x1="691" y1="487.00" x2="920.6" y2="487.00" stroke="#e4e4e4" stroke-width="2"/><line x1="691" y1="498.50" x2="920.6" y2="498.50" stroke="#d4d4d4" stroke-width="1.4"/><line x1="691" y1="510.00" x2="920.6" y2="510.00" stroke="#d4d4d4" stroke-width="1.4"/><line x1="691" y1="521.50" x2="920.6" y2="521.50" stroke="#d4d4d4" stroke-width="1.4"/><line x1="691" y1="533.00" x2="920.6" y2="533.00" stroke="#d4d4d4" stroke-width="1.4"/><line x1="691" y1="544.50" x2="920.6" y2="544.50" stroke="#d4d4d4" stroke-width="1.4"/><line x1="691" y1="556.00" x2="920.6" y2="556.00" stroke="#d4d4d4" stroke-width="1.4"/><line x1="691" y1="567.50" x2="920.6" y2="567.50" stroke="#d4d4d4" stroke-width="1.4"/><line x1="691" y1="579.00" x2="920.6" y2="579.00" stroke="#d4d4d4" stroke-width="1.4"/><line x1="691" y1="590.50" x2="920.6" y2="590.50" stroke="#d4d4d4" stroke-width="1.4"/><line x1="691" y1="602.00" x2="920.6" y2="602.00" stroke="#d4d4d4" stroke-width="1.4"/><line x1="691" y1="613.50" x2="920.6" y2="613.50" stroke="#d4d4d4" stroke-width="1.4"/><line x1="691" y1="625.00" x2="920.6" y2="625.00" stroke="#d4d4d4" stroke-width="1.4"/><line x1="691" y1="636.50" x2="920.6" y2="636.50" stroke="#d4d4d4" stroke-width="1.4"/><line x1="691" y1="648.00" x2="920.6" y2="648.00" stroke="#e4e4e4" stroke-width="2"/><line x1="695.96" y1="487" x2="695.96" y2="652.5" stroke="#dedede" stroke-width="2"/><line x1="728.50" y1="487" x2="728.50" y2="652.5" stroke="#c4c4c4" stroke-width="1"/><line x1="744.50" y1="487" x2="744.50" y2="652.5" stroke="#c4c4c4" stroke-width="1"/><line x1="760.50" y1="487" x2="760.50" y2="652.5" stroke="#c4c4c4" stroke-width="1"/><line x1="776.50" y1="487" x2="776.50" y2="652.5" stroke="#c4c4c4" stroke-width="1"/><line x1="792.50" y1="487" x2="792.50" y2="652.5" stroke="#c4c4c4" stroke-width="1"/><line x1="808.50" y1="487" x2="808.50" y2="652.5" stroke="#c4c4c4" stroke-width="1"/><line x1="824.50" y1="487" x2="824.50" y2="652.5" stroke="#c4c4c4" stroke-width="1"/><line x1="840.50" y1="487" x2="840.50" y2="652.5" stroke="#c4c4c4" stroke-width="1"/><line x1="856.50" y1="487" x2="856.50" y2="652.5" stroke="#c4c4c4" stroke-width="1"/><line x1="872.50" y1="487" x2="872.50" y2="652.5" stroke="#c4c4c4" stroke-width="1"/><line x1="888.50" y1="487" x2="888.50" y2="652.5" stroke="#c4c4c4" stroke-width="1"/><line x1="904.50" y1="487" x2="904.50" y2="652.5" stroke="#c4c4c4" stroke-width="1"/><line x1="920.52" y1="487" x2="920.52" y2="652.5" stroke="#dedede" stroke-width="2"/><line x1="691" y1="625.00" x2="920.6" y2="625.00" stroke="#a8a8a8" stroke-width="2"/><clipPath id="c5"><rect x="691" y="487" width="229.60000000000002" height="161"/></clipPath><g clip-path="url(#c5)"><path d="M712.03,459.9h0.95V526.1h-0.95ZM712.63,466.5h0.95V526.1h-0.95ZM713.23,466.5h0.95V524.7h-0.95ZM713.83,465.9h0.95V524.7h-0.95ZM714.43,465.9h0.95V527.6h-0.95ZM715.03,476.6h0.95V527.6h-0.95ZM715.63,476.6h0.95V524.4h-0.95ZM716.23,467.8h0.95V524.4h-0.95ZM716.83,467.8h0.95V522.4h-0.95ZM717.43,467.0h0.95V522.4h-0.95ZM718.03,467.0h0.95V529.6h-0.95ZM718.63,468.2h0.95V529.6h-0.95ZM719.23,468.2h0.95V522.8h-0.95ZM719.83,467.1h0.95V522.8h-0.95ZM720.43,467.1h0.95V524.1h-0.95ZM721.03,476.0h0.95V524.1h-0.95ZM721.63,476.0h0.95V523.2h-0.95ZM722.23,474.0h0.95V523.2h-0.95ZM722.83,474.0h0.95V527.6h-0.95ZM723.43,465.1h0.95V527.6h-0.95ZM724.03,465.1h0.95V526.9h-0.95ZM724.63,468.5h0.95V526.9h-0.95ZM725.23,468.5h0.95V527.0h-0.95ZM725.83,465.8h0.95V527.0h-0.95ZM726.43,465.8h0.95V526.2h-0.95ZM727.03,475.2h0.95V526.2h-0.95ZM727.63,475.2h0.95V528.2h-0.95ZM728.23,475.2h0.95V528.2h-0.95ZM728.83,475.2h0.95V536.6h-0.95ZM729.43,505.9h0.95V536.6h-0.95ZM730.03,505.9h0.95V557.4h-0.95ZM730.63,507.7h0.95V557.4h-0.95ZM731.23,507.7h0.95V555.8h-0.95ZM731.83,505.4h0.95V555.8h-0.95ZM732.43,505.4h0.95V561.6h-0.95ZM733.03,511.3h0.95V561.6h-0.95ZM733.63,511.3h0.95V565.7h-0.95ZM734.23,510.1h0.95V565.7h-0.95ZM734.83,510.1h0.95V570.9h-0.95ZM735.43,508.8h0.95V570.9h-0.95ZM736.03,508.8h0.95V553.3h-0.95ZM736.63,515.9h0.95V553.3h-0.95ZM737.23,515.9h0.95V562.2h-0.95ZM737.83,517.4h0.95V562.2h-0.95ZM738.43,517.4h0.95V568.8h-0.95ZM739.03,515.4h0.95V568.8h-0.95ZM739.63,515.4h0.95V540.9h-0.95ZM740.23,520.4h0.95V540.9h-0.95ZM740.83,520.4h0.95V570.1h-0.95ZM741.43,521.9h0.95V570.1h-0.95ZM742.03,521.9h0.95V563.5h-0.95ZM742.63,523.5h0.95V563.5h-0.95ZM743.23,523.5h0.95V573.9h-0.95ZM743.83,525.3h0.95V573.9h-0.95ZM744.43,525.3h0.95V577.9h-0.95ZM745.03,576.7h0.95V585.4h-0.95ZM745.63,526.8h0.95V585.4h-0.95ZM746.23,526.8h0.95V581.8h-0.95ZM746.83,523.7h0.95V581.8h-0.95ZM747.43,523.7h0.95V577.0h-0.95ZM748.03,529.3h0.95V577.0h-0.95ZM748.63,529.3h0.95V585.8h-0.95ZM749.23,529.9h0.95V585.8h-0.95ZM749.83,529.9h0.95V578.0h-0.95ZM750.43,525.4h0.95V578.0h-0.95ZM751.03,525.4h0.95V586.2h-0.95ZM751.63,575.8h0.95V586.2h-0.95ZM752.23,532.5h0.95V577.0h-0.95ZM752.83,532.5h0.95V580.7h-0.95ZM753.43,528.0h0.95V580.7h-0.95ZM754.03,528.0h0.95V533.5h-0.95ZM754.63,532.3h0.95V574.0h-0.95ZM755.23,527.9h0.95V574.0h-0.95ZM755.83,527.9h0.95V583.5h-0.95ZM756.43,520.5h0.95V583.5h-0.95ZM757.03,520.5h0.95V583.2h-0.95ZM757.63,534.7h0.95V583.2h-0.95ZM758.23,534.7h0.95V585.1h-0.95ZM758.83,531.8h0.95V585.1h-0.95ZM759.43,531.8h0.95V586.3h-0.95ZM760.03,580.9h0.95V586.3h-0.95ZM760.63,536.9h0.95V582.1h-0.95ZM761.23,519.4h0.95V538.1h-0.95ZM761.83,519.4h0.95V584.9h-0.95ZM762.43,526.2h0.95V584.9h-0.95ZM763.03,526.2h0.95V577.0h-0.95ZM763.63,532.2h0.95V577.0h-0.95ZM764.23,532.2h0.95V564.1h-0.95ZM764.83,525.1h0.95V564.1h-0.95ZM765.43,525.1h0.95V586.0h-0.95ZM766.03,521.1h0.95V586.0h-0.95ZM766.63,521.1h0.95V580.1h-0.95ZM767.23,535.1h0.95V580.1h-0.95ZM767.83,535.1h0.95V584.3h-0.95ZM768.43,529.5h0.95V584.3h-0.95ZM769.03,529.5h0.95V586.9h-0.95ZM769.63,542.3h0.95V586.9h-0.95ZM770.23,542.3h0.95V593.8h-0.95ZM770.83,541.0h0.95V593.8h-0.95ZM771.43,541.0h0.95V588.3h-0.95ZM772.03,526.5h0.95V588.3h-0.95ZM772.63,526.5h0.95V597.2h-0.95ZM773.23,543.7h0.95V597.2h-0.95ZM773.83,543.7h0.95V590.0h-0.95ZM774.43,543.4h0.95V590.0h-0.95ZM775.03,543.4h0.95V585.1h-0.95ZM775.63,545.0h0.95V585.1h-0.95ZM776.23,545.0h0.95V587.4h-0.95ZM776.83,543.0h0.95V587.4h-0.95ZM777.43,543.0h0.95V595.9h-0.95ZM778.03,544.3h0.95V595.9h-0.95ZM778.63,544.3h0.95V587.8h-0.95ZM779.23,547.3h0.95V587.8h-0.95ZM779.83,547.3h0.95V586.0h-0.95ZM780.43,547.8h0.95V586.0h-0.95ZM781.03,547.8h0.95V590.1h-0.95ZM781.63,588.4h0.95V590.1h-0.95ZM782.23,547.2h0.95V589.6h-0.95ZM782.83,547.2h0.95V589.2h-0.95ZM783.43,548.7h0.95V589.2h-0.95ZM784.03,548.7h0.95V599.4h-0.95ZM784.63,544.2h0.95V599.4h-0.95ZM785.23,544.2h0.95V596.6h-0.95ZM785.83,558.1h0.95V596.6h-0.95ZM786.43,558.1h0.95V586.8h-0.95ZM787.03,532.9h0.95V586.8h-0.95ZM787.63,532.9h0.95V591.8h-0.95ZM788.23,590.6h0.95V596.7h-0.95ZM788.83,544.9h0.95V596.7h-0.95ZM789.43,544.9h0.95V586.5h-0.95ZM790.03,551.0h0.95V586.5h-0.95ZM790.63,551.0h0.95V591.0h-0.95ZM791.23,533.2h0.95V591.0h-0.95ZM791.83,533.2h0.95V541.2h-0.95ZM792.43,540.0h0.95V593.2h-0.95ZM793.03,542.7h0.95V593.2h-0.95ZM793.63,542.7h0.95V592.4h-0.95ZM794.23,586.0h0.95V592.4h-0.95ZM794.83,553.4h0.95V587.2h-0.95ZM795.43,550.8h0.95V554.6h-0.95ZM796.03,550.8h0.95V601.3h-0.95ZM796.63,549.9h0.95V601.3h-0.95ZM797.23,549.9h0.95V599.6h-0.95ZM797.83,534.9h0.95V599.6h-0.95ZM798.43,534.9h0.95V549.5h-0.95ZM799.03,548.3h0.95V594.8h-0.95ZM799.63,552.4h0.95V594.8h-0.95ZM800.23,552.4h0.95V591.6h-0.95ZM800.83,546.8h0.95V591.6h-0.95ZM801.43,546.8h0.95V600.7h-0.95ZM802.03,551.3h0.95V600.7h-0.95ZM802.63,551.3h0.95V602.0h-0.95ZM803.23,535.8h0.95V602.0h-0.95ZM803.83,535.8h0.95V595.4h-0.95ZM804.43,556.2h0.95V595.4h-0.95ZM805.03,556.2h0.95V591.8h-0.95ZM805.63,556.2h0.95V591.8h-0.95ZM806.23,556.2h0.95V603.7h-0.95ZM806.83,535.1h0.95V603.7h-0.95ZM807.43,535.1h0.95V594.3h-0.95ZM808.03,557.2h0.95V594.3h-0.95ZM808.63,557.2h0.95V581.8h-0.95ZM809.23,557.5h0.95V581.8h-0.95ZM809.83,557.5h0.95V595.0h-0.95ZM810.43,558.3h0.95V595.0h-0.95ZM811.03,558.3h0.95V596.1h-0.95ZM811.63,550.5h0.95V596.1h-0.95ZM812.23,550.5h0.95V594.4h-0.95ZM812.83,559.3h0.95V594.4h-0.95ZM813.43,559.3h0.95V595.1h-0.95ZM814.03,557.0h0.95V595.1h-0.95ZM814.63,557.0h0.95V593.8h-0.95ZM815.23,536.0h0.95V593.8h-0.95ZM815.83,536.0h0.95V596.1h-0.95ZM816.43,536.8h0.95V596.1h-0.95ZM817.03,536.8h0.95V597.2h-0.95ZM817.63,557.3h0.95V597.2h-0.95ZM818.23,557.3h0.95V602.8h-0.95ZM818.83,551.6h0.95V602.8h-0.95ZM819.43,551.6h0.95V594.0h-0.95ZM820.03,536.9h0.95V594.0h-0.95ZM820.63,536.9h0.95V605.7h-0.95ZM821.23,540.9h0.95V605.7h-0.95ZM821.83,540.9h0.95V594.2h-0.95ZM822.43,546.9h0.95V594.2h-0.95ZM823.03,546.9h0.95V594.6h-0.95ZM823.63,537.9h0.95V594.6h-0.95ZM824.23,537.9h0.95V601.6h-0.95ZM824.83,562.2h0.95V601.6h-0.95ZM825.43,562.2h0.95V598.4h-0.95ZM826.03,555.1h0.95V598.4h-0.95ZM826.63,555.1h0.95V596.8h-0.95ZM827.23,560.4h0.95V596.8h-0.95ZM827.83,560.4h0.95V607.8h-0.95ZM828.43,558.9h0.95V607.8h-0.95ZM829.03,558.9h0.95V602.6h-0.95ZM829.63,561.1h0.95V602.6h-0.95ZM830.23,561.1h0.95V598.8h-0.95ZM830.83,550.5h0.95V598.8h-0.95ZM831.43,550.5h0.95V595.3h-0.95ZM832.03,560.2h0.95V595.3h-0.95ZM832.63,560.2h0.95V595.4h-0.95ZM833.23,557.3h0.95V595.4h-0.95ZM833.83,557.3h0.95V596.2h-0.95ZM834.43,552.1h0.95V596.2h-0.95ZM835.03,552.1h0.95V599.0h-0.95ZM835.63,560.9h0.95V599.0h-0.95ZM836.23,560.9h0.95V597.6h-0.95ZM836.83,563.2h0.95V597.6h-0.95ZM837.43,563.2h0.95V603.5h-0.95ZM838.03,565.1h0.95V603.5h-0.95ZM838.63,565.1h0.95V597.2h-0.95ZM839.23,565.9h0.95V597.2h-0.95ZM839.83,565.9h0.95V598.1h-0.95ZM840.43,555.8h0.95V598.1h-0.95ZM841.03,555.8h0.95V598.5h-0.95ZM841.63,541.6h0.95V598.5h-0.95ZM842.23,541.6h0.95V601.1h-0.95ZM842.83,566.1h0.95V601.1h-0.95ZM843.43,566.1h0.95V600.9h-0.95ZM844.03,549.9h0.95V600.9h-0.95ZM844.63,549.9h0.95V600.1h-0.95ZM845.23,563.7h0.95V600.1h-0.95ZM845.83,557.7h0.95V564.9h-0.95ZM846.43,557.7h0.95V606.7h-0.95ZM847.03,549.6h0.95V606.7h-0.95ZM847.63,549.6h0.95V606.4h-0.95ZM848.23,561.2h0.95V606.4h-0.95ZM848.83,561.2h0.95V607.3h-0.95ZM849.43,565.3h0.95V607.3h-0.95ZM850.03,565.3h0.95V601.3h-0.95ZM850.63,566.5h0.95V601.3h-0.95ZM851.23,566.5h0.95V600.3h-0.95ZM851.83,556.8h0.95V600.3h-0.95ZM852.43,556.8h0.95V607.3h-0.95ZM853.03,568.9h0.95V607.3h-0.95ZM853.63,568.9h0.95V603.0h-0.95ZM854.23,601.8h0.95V609.7h-0.95ZM854.83,558.5h0.95V609.7h-0.95ZM855.43,558.5h0.95V602.5h-0.95ZM856.03,552.5h0.95V602.5h-0.95ZM856.63,552.5h0.95V601.1h-0.95ZM857.23,567.5h0.95V601.1h-0.95ZM857.83,567.5h0.95V599.5h-0.95ZM858.43,566.5h0.95V599.5h-0.95ZM859.03,566.5h0.95V602.9h-0.95ZM859.63,571.1h0.95V602.9h-0.95ZM860.23,571.1h0.95V610.1h-0.95ZM860.83,569.4h0.95V610.1h-0.95ZM861.43,569.4h0.95V611.1h-0.95ZM862.03,568.3h0.95V611.1h-0.95ZM862.63,568.3h0.95V611.9h-0.95ZM863.23,570.5h0.95V611.9h-0.95ZM863.83,570.5h0.95V607.0h-0.95ZM864.43,571.7h0.95V607.0h-0.95ZM865.03,571.7h0.95V606.1h-0.95ZM865.63,574.8h0.95V606.1h-0.95ZM866.23,574.8h0.95V599.9h-0.95ZM866.83,563.5h0.95V599.9h-0.95ZM867.43,563.5h0.95V571.6h-0.95ZM868.03,570.4h0.95V600.6h-0.95ZM868.63,599.4h0.95V606.8h-0.95ZM869.23,572.8h0.95V606.8h-0.95ZM869.83,572.8h0.95V605.8h-0.95ZM870.43,569.3h0.95V605.8h-0.95ZM871.03,569.3h0.95V612.8h-0.95ZM871.63,573.0h0.95V612.8h-0.95ZM872.23,573.0h0.95V610.9h-0.95ZM872.83,553.0h0.95V610.9h-0.95ZM873.43,553.0h0.95V612.7h-0.95ZM874.03,572.1h0.95V612.7h-0.95ZM874.63,572.1h0.95V604.3h-0.95ZM875.23,580.1h0.95V604.3h-0.95ZM875.83,580.1h0.95V609.8h-0.95ZM876.43,570.6h0.95V609.8h-0.95ZM877.03,570.6h0.95V605.6h-0.95ZM877.63,570.9h0.95V605.6h-0.95ZM878.23,570.9h0.95V604.7h-0.95ZM878.83,556.5h0.95V604.7h-0.95ZM879.43,556.5h0.95V606.0h-0.95ZM880.03,573.5h0.95V606.0h-0.95ZM880.63,573.5h0.95V599.9h-0.95ZM881.23,564.2h0.95V599.9h-0.95ZM881.83,564.2h0.95V603.6h-0.95ZM882.43,573.1h0.95V603.6h-0.95ZM883.03,573.1h0.95V612.3h-0.95ZM883.63,562.0h0.95V612.3h-0.95ZM884.23,562.0h0.95V608.2h-0.95ZM884.83,573.4h0.95V608.2h-0.95ZM885.43,573.4h0.95V608.5h-0.95ZM886.03,576.2h0.95V608.5h-0.95ZM886.63,576.2h0.95V606.9h-0.95ZM887.23,573.4h0.95V606.9h-0.95ZM887.83,573.4h0.95V602.8h-0.95ZM888.43,568.0h0.95V602.8h-0.95ZM889.03,568.0h0.95V603.8h-0.95ZM889.63,573.3h0.95V603.8h-0.95ZM890.23,568.8h0.95V574.5h-0.95ZM890.83,568.8h0.95V602.4h-0.95ZM891.43,568.6h0.95V602.4h-0.95ZM892.03,568.6h0.95V609.5h-0.95ZM892.63,556.4h0.95V609.5h-0.95ZM893.23,556.4h0.95V603.2h-0.95ZM893.83,572.0h0.95V603.2h-0.95ZM894.43,572.0h0.95V608.5h-0.95ZM895.03,582.5h0.95V608.5h-0.95ZM895.63,582.5h0.95V611.9h-0.95ZM896.23,578.6h0.95V611.9h-0.95ZM896.83,578.6h0.95V605.3h-0.95ZM897.43,556.6h0.95V605.3h-0.95ZM898.03,556.6h0.95V606.4h-0.95ZM898.63,575.6h0.95V606.4h-0.95ZM899.23,575.6h0.95V611.7h-0.95ZM899.83,579.3h0.95V611.7h-0.95ZM900.43,579.3h0.95V609.0h-0.95ZM901.03,562.0h0.95V609.0h-0.95ZM901.63,562.0h0.95V605.3h-0.95ZM902.23,577.0h0.95V605.3h-0.95ZM902.83,577.0h0.95V606.0h-0.95ZM903.43,577.2h0.95V606.0h-0.95ZM904.03,577.2h0.95V611.4h-0.95ZM904.63,570.7h0.95V611.4h-0.95ZM905.23,570.7h0.95V607.8h-0.95ZM905.83,579.9h0.95V607.8h-0.95ZM906.43,579.9h0.95V605.0h-0.95ZM907.03,580.0h0.95V605.0h-0.95ZM907.63,580.0h0.95V605.0h-0.95ZM908.23,571.9h0.95V605.0h-0.95ZM908.83,571.9h0.95V610.6h-0.95ZM909.43,605.7h0.95V610.6h-0.95ZM910.03,579.7h0.95V606.9h-0.95ZM910.63,579.7h0.95V581.0h-0.95ZM911.23,579.8h0.95V583.1h-0.95ZM911.83,581.9h0.95V606.1h-0.95ZM912.43,559.2h0.95V606.1h-0.95ZM913.03,559.2h0.95V609.7h-0.95ZM913.63,575.7h0.95V609.7h-0.95ZM914.23,575.7h0.95V613.0h-0.95Z" fill="#ff7043" fill-opacity="0.2"/><line x1="712.00" y1="487" x2="712.00" y2="652.5" stroke="#9a9a9a" stroke-width="2"/><path d="M712.03,482.98 L712.53,491.25 L713.03,497.99 L713.53,498.81 L714.03,501.83 L714.53,504.04 L715.03,503.12 L715.53,503.81 L716.03,503.34 L716.53,505.52 L717.03,505.91 L717.53,504.37 L718.03,504.16 L718.53,504.87 L719.03,504.87 L719.53,505.36 L720.03,504.27 L720.53,504.74 L721.03,503.65 L721.53,503.67 L722.03,503.26 L722.53,504.23 L723.03,504.17 L723.53,504.46 L724.03,505.36 L724.53,504.08 L725.03,504.33 L725.53,504.77 L726.03,506.05 L726.53,504.75 L727.03,504.87 L727.53,505.35 L728.03,506.13 L728.53,505.35 L729.03,505.27 L729.53,506.72 L730.03,506.97 L730.53,507.73 L731.03,507.18 L731.53,508.47 L732.03,508.88 L732.53,510.24 L733.03,512.23 L733.53,513.17 L734.03,513.59 L734.53,513.13 L735.03,514.21 L735.53,515.59 L736.03,514.94 L736.53,515.70 L737.03,517.05 L737.53,516.82 L738.03,517.74 L738.53,518.11 L739.03,519.80 L739.53,519.72 L740.03,519.38 L740.53,519.82 L741.03,521.88 L741.53,521.30 L742.03,523.19 L742.53,522.79 L743.03,524.17 L743.53,524.48 L744.03,525.95 L744.53,525.50 L745.03,526.89 L745.53,528.21 L746.03,528.04 L746.53,530.47 L747.03,531.22 L747.53,531.92 L748.03,532.59 L748.53,533.36 L749.03,533.26 L749.53,534.59 L750.03,534.03 L750.53,533.69 L751.03,536.10 L751.53,536.52 L752.03,535.44 L752.53,536.15 L753.03,536.26 L753.53,537.80 L754.03,536.99 L754.53,538.91 L755.03,537.56 L755.53,538.84 L756.03,540.15 L756.53,539.90 L757.03,539.54 L757.53,539.73 L758.03,541.66 L758.53,540.74 L759.03,541.71 L759.53,542.95 L760.03,542.78 L760.53,542.65 L761.03,544.89 L761.53,545.23 L762.03,545.47 L762.53,544.80 L763.03,546.18 L763.53,547.78 L764.03,547.24 L764.53,547.15 L765.03,549.22 L765.53,548.36 L766.03,549.27 L766.53,548.94 L767.03,551.05 L767.53,551.01 L768.03,551.01 L768.53,551.27 L769.03,551.27 L769.53,551.89 L770.03,552.36 L770.53,551.58 L771.03,553.53 L771.53,553.97 L772.03,552.65 L772.53,553.25 L773.03,554.93 L773.53,554.43 L774.03,554.31 L774.53,555.94 L775.03,556.95 L775.53,555.85 L776.03,556.75 L776.53,557.00 L777.03,557.37 L777.53,557.81 L778.03,558.89 L778.53,559.08 L779.03,559.44 L779.53,559.28 L780.03,559.75 L780.53,560.03 L781.03,560.30 L781.53,560.47 L782.03,560.94 L782.53,559.63 L783.03,560.18 L783.53,561.59 L784.03,561.37 L784.53,561.22 L785.03,562.48 L785.53,561.76 L786.03,563.33 L786.53,562.63 L787.03,564.30 L787.53,563.22 L788.03,565.01 L788.53,563.85 L789.03,565.19 L789.53,563.93 L790.03,564.97 L790.53,564.83 L791.03,566.19 L791.53,566.05 L792.03,565.92 L792.53,565.07 L793.03,566.21 L793.53,565.76 L794.03,565.65 L794.53,567.23 L795.03,567.07 L795.53,568.31 L796.03,568.15 L796.53,566.51 L797.03,568.78 L797.53,568.03 L798.03,569.29 L798.53,567.92 L799.03,568.49 L799.53,569.21 L800.03,568.40 L800.53,569.01 L801.03,569.12 L801.53,569.41 L802.03,570.15 L802.53,570.34 L803.03,571.50 L803.53,570.31 L804.03,570.57 L804.53,570.96 L805.03,570.58 L805.53,571.61 L806.03,571.93 L806.53,571.62 L807.03,572.88 L807.53,572.16 L808.03,574.07 L808.53,574.69 L809.03,574.19 L809.53,573.54 L810.03,573.70 L810.53,573.63 L811.03,574.05 L811.53,575.72 L812.03,575.66 L812.53,576.02 L813.03,575.02 L813.53,575.59 L814.03,576.09 L814.53,576.10 L815.03,576.21 L815.53,574.93 L816.03,577.28 L816.53,576.46 L817.03,575.91 L817.53,576.15 L818.03,577.29 L818.53,577.80 L819.03,575.90 L819.53,576.44 L820.03,576.20 L820.53,577.71 L821.03,577.75 L821.53,577.92 L822.03,577.07 L822.53,577.72 L823.03,578.91 L823.53,577.75 L824.03,577.59 L824.53,577.74 L825.03,579.22 L825.53,578.05 L826.03,579.26 L826.53,579.17 L827.03,579.77 L827.53,578.15 L828.03,578.82 L828.53,580.46 L829.03,579.53 L829.53,578.70 L830.03,578.89 L830.53,579.18 L831.03,580.40 L831.53,579.75 L832.03,579.36 L832.53,579.86 L833.03,581.22 L833.53,581.16 L834.03,580.74 L834.53,580.37 L835.03,580.11 L835.53,580.25 L836.03,582.11 L836.53,581.57 L837.03,580.27 L837.53,582.12 L838.03,582.58 L838.53,581.41 L839.03,582.63 L839.53,581.42 L840.03,581.54 L840.53,581.77 L841.03,582.09 L841.53,581.86 L842.03,581.62 L842.53,581.35 L843.03,581.93 L843.53,582.63 L844.03,583.40 L844.53,583.11 L845.03,582.75 L845.53,582.60 L846.03,582.11 L846.53,583.42 L847.03,583.74 L847.53,582.80 L848.03,583.80 L848.53,584.10 L849.03,583.10 L849.53,582.44 L850.03,584.47 L850.53,583.87 L851.03,582.99 L851.53,584.35 L852.03,584.53 L852.53,584.65 L853.03,584.85 L853.53,584.74 L854.03,583.72 L854.53,585.81 L855.03,585.41 L855.53,585.93 L856.03,585.15 L856.53,585.54 L857.03,585.08 L857.53,585.73 L858.03,584.24 L858.53,584.79 L859.03,585.84 L859.53,584.89 L860.03,585.30 L860.53,584.92 L861.03,585.90 L861.53,584.42 L862.03,584.84 L862.53,584.32 L863.03,584.36 L863.53,585.12 L864.03,586.40 L864.53,584.62 L865.03,585.68 L865.53,585.99 L866.03,585.92 L866.53,584.40 L867.03,584.39 L867.53,586.02 L868.03,584.88 L868.53,586.21 L869.03,586.12 L869.53,587.05 L870.03,585.92 L870.53,587.06 L871.03,585.78 L871.53,586.23 L872.03,586.69 L872.53,586.87 L873.03,587.47 L873.53,587.07 L874.03,586.90 L874.53,587.91 L875.03,588.15 L875.53,589.10 L876.03,588.73 L876.53,588.68 L877.03,588.33 L877.53,589.69 L878.03,590.25 L878.53,588.56 L879.03,589.27 L879.53,590.50 L880.03,589.37 L880.53,589.00 L881.03,589.40 L881.53,591.14 L882.03,589.25 L882.53,589.18 L883.03,590.53 L883.53,589.33 L884.03,590.90 L884.53,589.67 L885.03,590.15 L885.53,590.24 L886.03,591.18 L886.53,591.28 L887.03,589.66 L887.53,589.86 L888.03,589.43 L888.53,589.66 L889.03,591.42 L889.53,590.17 L890.03,590.97 L890.53,591.18 L891.03,590.73 L891.53,590.36 L892.03,590.37 L892.53,591.08 L893.03,592.66 L893.53,591.33 L894.03,591.61 L894.53,593.26 L895.03,593.35 L895.53,591.57 L896.03,593.31 L896.53,592.70 L897.03,592.86 L897.53,593.90 L898.03,592.17 L898.53,593.53 L899.03,594.47 L899.53,594.83 L900.03,594.58 L900.53,594.06 L901.03,593.70 L901.53,595.41 L902.03,593.24 L902.53,593.52 L903.03,593.97 L903.53,595.58 L904.03,594.30 L904.53,595.46 L905.03,593.65 L905.53,594.16 L906.03,594.18 L906.53,593.61 L907.03,595.43 L907.53,595.48 L908.03,595.14 L908.53,594.51 L909.03,595.29 L909.53,595.50 L910.03,594.56 L910.53,594.95 L911.03,593.97 L911.53,596.10 L912.03,594.11 L912.53,594.49 L913.03,596.17 L913.53,594.26 L914.03,594.62 L914.53,595.22 L915.03,596.58 L915.11,595.44" fill="none" stroke="#ff7043" stroke-width="2.1" stroke-linejoin="round"/></g><line x1="712.00" y1="648" x2="712.00" y2="652.5" stroke="#c4c4c4" stroke-width="1.5"/><circle cx="915.11" cy="595.44" r="3.7" fill="#ff7043"/></svg><div class="yl" style="right:632.50px;top:492.61px">0.550</div><div class="yl" style="right:632.50px;top:515.61px">0.450</div><div class="yl" style="right:632.50px;top:538.61px">0.350</div><div class="yl" style="right:632.50px;top:561.61px">0.250</div><div class="yl" style="right:632.50px;top:584.61px">0.150</div><div class="yl" style="right:632.50px;top:607.61px">0.0500</div><div class="yl" style="right:632.50px;top:630.61px">-0.0500</div><div class="xl" style="left:672.00px;top:656.11px">0.000</div><div class="xl" style="left:720.12px;top:656.11px">6.000k</div><div class="xl" style="left:768.24px;top:656.11px">12.00k</div><div class="xl" style="left:816.36px;top:656.11px">18.00k</div><div class="xl" style="left:864.48px;top:656.11px">24.00k</div><div class="t" style="left:624.60px;top:464.10px;font-size:13px;line-height:13px;color:#212121;font-weight:400;">Train/Loss</div><svg class="ic" style="left:630.10px;top:671.80px" width="80" height="22" viewBox="0 0 80 22"><path d="M3,8.6 V4.6 H7 M9.5,4.6 H13.5 V8.6 M13.5,11.600000000000001 V15.600000000000001 H9.5 M7,15.600000000000001 H3 V11.600000000000001" fill="none" stroke="#2196f3" stroke-width="2"/><rect x="29.2" y="3.1" width="16.2" height="3" fill="#2196f3"/><rect x="29.2" y="8.4" width="16.2" height="2.6" fill="#2196f3"/><rect x="29.2" y="13.2" width="16.2" height="1.6" fill="#2196f3"/><rect x="29.2" y="16.3" width="16.2" height="1.2" fill="#2196f3" opacity="0.55"/><rect x="57" y="3" width="17" height="14.1" rx="2" fill="none" stroke="#2196f3" stroke-width="2"/><path d="M63.9,6.199999999999999 L65.5,4.199999999999999 L67.1,6.199999999999999Z M63.9,14.0 L65.5,16.0 L67.1,14.0Z M60.3,8.5 L58.6,10.1 L60.3,11.7Z M70.9,8.5 L72.6,10.1 L70.9,11.7Z" fill="#2196f3"/></svg><svg class="ch" width="1319" height="772" viewBox="0 0 1319 772"><line x1="979.3" y1="487.00" x2="1226.9" y2="487.00" stroke="#e4e4e4" stroke-width="2"/><line x1="979.3" y1="498.50" x2="1226.9" y2="498.50" stroke="#d4d4d4" stroke-width="1.4"/><line x1="979.3" y1="510.00" x2="1226.9" y2="510.00" stroke="#d4d4d4" stroke-width="1.4"/><line x1="979.3" y1="521.50" x2="1226.9" y2="521.50" stroke="#d4d4d4" stroke-width="1.4"/><line x1="979.3" y1="533.00" x2="1226.9" y2="533.00" stroke="#d4d4d4" stroke-width="1.4"/><line x1="979.3" y1="544.50" x2="1226.9" y2="544.50" stroke="#d4d4d4" stroke-width="1.4"/><line x1="979.3" y1="556.00" x2="1226.9" y2="556.00" stroke="#d4d4d4" stroke-width="1.4"/><line x1="979.3" y1="567.50" x2="1226.9" y2="567.50" stroke="#d4d4d4" stroke-width="1.4"/><line x1="979.3" y1="579.00" x2="1226.9" y2="579.00" stroke="#d4d4d4" stroke-width="1.4"/><line x1="979.3" y1="590.50" x2="1226.9" y2="590.50" stroke="#d4d4d4" stroke-width="1.4"/><line x1="979.3" y1="602.00" x2="1226.9" y2="602.00" stroke="#d4d4d4" stroke-width="1.4"/><line x1="979.3" y1="613.50" x2="1226.9" y2="613.50" stroke="#d4d4d4" stroke-width="1.4"/><line x1="979.3" y1="625.00" x2="1226.9" y2="625.00" stroke="#d4d4d4" stroke-width="1.4"/><line x1="979.3" y1="636.50" x2="1226.9" y2="636.50" stroke="#d4d4d4" stroke-width="1.4"/><line x1="979.3" y1="648.00" x2="1226.9" y2="648.00" stroke="#e4e4e4" stroke-width="2"/><line x1="984.27" y1="487" x2="984.27" y2="652.5" stroke="#dedede" stroke-width="2"/><line x1="1018.50" y1="487" x2="1018.50" y2="652.5" stroke="#c4c4c4" stroke-width="1"/><line x1="1036.50" y1="487" x2="1036.50" y2="652.5" stroke="#c4c4c4" stroke-width="1"/><line x1="1053.50" y1="487" x2="1053.50" y2="652.5" stroke="#c4c4c4" stroke-width="1"/><line x1="1070.50" y1="487" x2="1070.50" y2="652.5" stroke="#c4c4c4" stroke-width="1"/><line x1="1088.50" y1="487" x2="1088.50" y2="652.5" stroke="#c4c4c4" stroke-width="1"/><line x1="1105.50" y1="487" x2="1105.50" y2="652.5" stroke="#c4c4c4" stroke-width="1"/><line x1="1122.50" y1="487" x2="1122.50" y2="652.5" stroke="#c4c4c4" stroke-width="1"/><line x1="1140.50" y1="487" x2="1140.50" y2="652.5" stroke="#c4c4c4" stroke-width="1"/><line x1="1157.50" y1="487" x2="1157.50" y2="652.5" stroke="#c4c4c4" stroke-width="1"/><line x1="1174.50" y1="487" x2="1174.50" y2="652.5" stroke="#c4c4c4" stroke-width="1"/><line x1="1192.50" y1="487" x2="1192.50" y2="652.5" stroke="#c4c4c4" stroke-width="1"/><line x1="1209.50" y1="487" x2="1209.50" y2="652.5" stroke="#c4c4c4" stroke-width="1"/><line x1="1226.89" y1="487" x2="1226.89" y2="652.5" stroke="#dedede" stroke-width="2"/><clipPath id="c6"><rect x="979.3" y="487" width="247.60000000000014" height="161"/></clipPath><g clip-path="url(#c6)"><path d="M1001.61,570.1h0.95V675.5h-0.95ZM1002.21,572.6h0.95V675.5h-0.95ZM1002.81,572.6h0.95V667.2h-0.95ZM1003.41,582.1h0.95V667.2h-0.95ZM1004.01,582.1h0.95V685.9h-0.95ZM1004.61,575.7h0.95V685.9h-0.95ZM1005.21,575.7h0.95V665.2h-0.95ZM1005.81,573.5h0.95V665.2h-0.95ZM1006.41,571.1h0.95V574.7h-0.95ZM1007.01,571.1h0.95V676.2h-0.95ZM1007.61,570.1h0.95V676.2h-0.95ZM1008.21,570.1h0.95V665.7h-0.95ZM1008.81,573.8h0.95V665.7h-0.95ZM1009.41,573.8h0.95V679.0h-0.95ZM1010.01,581.6h0.95V679.0h-0.95ZM1010.61,581.6h0.95V680.4h-0.95ZM1011.21,565.8h0.95V680.4h-0.95ZM1011.81,565.8h0.95V567.0h-0.95ZM1012.41,565.8h0.95V664.0h-0.95ZM1013.01,576.6h0.95V664.0h-0.95ZM1013.61,576.6h0.95V662.2h-0.95ZM1014.21,578.1h0.95V662.2h-0.95ZM1014.81,578.1h0.95V672.3h-0.95ZM1015.41,572.6h0.95V672.3h-0.95ZM1016.01,572.6h0.95V662.4h-0.95ZM1016.61,581.4h0.95V662.4h-0.95ZM1017.21,581.4h0.95V673.5h-0.95ZM1017.81,582.0h0.95V673.5h-0.95ZM1018.41,582.0h0.95V687.0h-0.95ZM1019.01,576.4h0.95V687.0h-0.95ZM1019.61,576.4h0.95V675.6h-0.95ZM1020.21,573.2h0.95V675.6h-0.95ZM1020.81,573.2h0.95V673.5h-0.95ZM1021.41,571.8h0.95V673.5h-0.95ZM1022.01,571.8h0.95V626.2h-0.95ZM1022.61,571.6h0.95V626.2h-0.95ZM1023.21,571.6h0.95V690.3h-0.95ZM1023.81,575.3h0.95V690.3h-0.95ZM1024.41,575.3h0.95V689.6h-0.95ZM1025.01,560.0h0.95V689.6h-0.95ZM1025.61,560.0h0.95V619.9h-0.95ZM1026.21,553.4h0.95V619.9h-0.95ZM1026.81,553.4h0.95V629.4h-0.95ZM1027.41,551.4h0.95V629.4h-0.95ZM1028.01,551.4h0.95V648.8h-0.95ZM1028.61,550.4h0.95V648.8h-0.95ZM1029.21,550.4h0.95V632.0h-0.95ZM1029.81,525.6h0.95V632.0h-0.95ZM1030.41,525.6h0.95V629.4h-0.95ZM1031.01,542.2h0.95V629.4h-0.95ZM1031.61,542.2h0.95V634.3h-0.95ZM1032.21,526.5h0.95V634.3h-0.95ZM1032.81,526.5h0.95V625.9h-0.95ZM1033.41,624.7h0.95V626.1h-0.95ZM1034.01,623.3h0.95V626.1h-0.95ZM1034.61,542.2h0.95V624.5h-0.95ZM1035.21,542.2h0.95V625.4h-0.95ZM1035.81,543.6h0.95V625.4h-0.95ZM1036.41,543.6h0.95V621.0h-0.95ZM1037.01,528.2h0.95V621.0h-0.95ZM1037.61,528.2h0.95V607.2h-0.95ZM1038.21,512.6h0.95V607.2h-0.95ZM1038.81,512.6h0.95V623.1h-0.95ZM1039.41,536.2h0.95V623.1h-0.95ZM1040.01,536.2h0.95V602.0h-0.95ZM1040.61,533.4h0.95V602.0h-0.95ZM1041.21,533.4h0.95V599.4h-0.95ZM1041.81,530.0h0.95V599.4h-0.95ZM1042.41,530.0h0.95V617.2h-0.95ZM1043.01,510.6h0.95V617.2h-0.95ZM1043.61,510.6h0.95V595.4h-0.95ZM1044.21,594.2h0.95V618.0h-0.95ZM1044.81,593.8h0.95V618.0h-0.95ZM1045.41,530.3h0.95V595.0h-0.95ZM1046.01,515.6h0.95V531.5h-0.95ZM1046.61,515.6h0.95V595.1h-0.95ZM1047.21,515.1h0.95V595.1h-0.95ZM1047.81,515.1h0.95V594.2h-0.95ZM1048.41,512.6h0.95V594.2h-0.95ZM1049.01,512.6h0.95V592.8h-0.95ZM1049.61,512.3h0.95V592.8h-0.95ZM1050.21,512.3h0.95V592.0h-0.95ZM1050.81,519.4h0.95V592.0h-0.95ZM1051.41,519.4h0.95V605.6h-0.95ZM1052.01,515.5h0.95V605.6h-0.95ZM1052.61,515.5h0.95V600.0h-0.95ZM1053.21,576.3h0.95V600.0h-0.95ZM1053.81,576.3h0.95V612.2h-0.95ZM1054.41,525.9h0.95V612.2h-0.95ZM1055.01,525.9h0.95V529.4h-0.95ZM1055.61,528.2h0.95V590.1h-0.95ZM1056.21,525.1h0.95V590.1h-0.95ZM1056.81,517.2h0.95V526.3h-0.95ZM1057.41,509.0h0.95V518.4h-0.95ZM1058.01,509.0h0.95V590.0h-0.95ZM1058.61,511.0h0.95V590.0h-0.95ZM1059.21,511.0h0.95V591.2h-0.95ZM1059.81,519.3h0.95V591.2h-0.95ZM1060.41,519.3h0.95V589.2h-0.95ZM1061.01,522.4h0.95V589.2h-0.95ZM1061.61,522.4h0.95V594.8h-0.95ZM1062.21,525.3h0.95V594.8h-0.95ZM1062.81,525.3h0.95V601.2h-0.95ZM1063.41,509.0h0.95V601.2h-0.95ZM1064.01,509.0h0.95V579.0h-0.95ZM1064.61,519.1h0.95V579.0h-0.95ZM1065.21,519.1h0.95V593.6h-0.95ZM1065.81,506.6h0.95V593.6h-0.95ZM1066.41,506.6h0.95V600.1h-0.95ZM1067.01,523.4h0.95V600.1h-0.95ZM1067.61,523.4h0.95V604.6h-0.95ZM1068.21,525.6h0.95V604.6h-0.95ZM1068.81,525.6h0.95V589.6h-0.95ZM1069.41,514.7h0.95V589.6h-0.95ZM1070.01,514.7h0.95V585.5h-0.95ZM1070.61,503.8h0.95V585.5h-0.95ZM1071.21,503.8h0.95V591.3h-0.95ZM1071.81,523.7h0.95V591.3h-0.95ZM1072.41,513.1h0.95V524.9h-0.95ZM1073.01,513.1h0.95V585.3h-0.95ZM1073.61,515.4h0.95V585.3h-0.95ZM1074.21,515.4h0.95V579.8h-0.95ZM1074.81,512.2h0.95V579.8h-0.95ZM1075.41,512.2h0.95V590.2h-0.95ZM1076.01,509.6h0.95V590.2h-0.95ZM1076.61,509.6h0.95V578.4h-0.95ZM1077.21,513.1h0.95V578.4h-0.95ZM1077.81,513.1h0.95V590.3h-0.95ZM1078.41,510.0h0.95V590.3h-0.95ZM1079.01,510.0h0.95V577.6h-0.95ZM1079.61,507.7h0.95V577.6h-0.95ZM1080.21,507.7h0.95V589.3h-0.95ZM1080.81,501.6h0.95V589.3h-0.95ZM1081.41,501.6h0.95V586.3h-0.95ZM1082.01,512.6h0.95V586.3h-0.95ZM1082.61,512.6h0.95V575.7h-0.95ZM1083.21,508.4h0.95V575.7h-0.95ZM1083.81,508.4h0.95V584.7h-0.95ZM1084.41,500.0h0.95V584.7h-0.95ZM1085.01,500.0h0.95V575.1h-0.95ZM1085.61,502.1h0.95V575.1h-0.95ZM1086.21,502.1h0.95V571.3h-0.95ZM1086.81,504.4h0.95V571.3h-0.95ZM1087.41,504.4h0.95V574.3h-0.95ZM1088.01,500.5h0.95V574.3h-0.95ZM1088.61,500.5h0.95V570.1h-0.95ZM1089.21,504.8h0.95V570.1h-0.95ZM1089.81,504.8h0.95V580.5h-0.95ZM1090.41,509.4h0.95V580.5h-0.95ZM1091.01,509.4h0.95V564.8h-0.95ZM1091.61,502.7h0.95V564.8h-0.95ZM1092.21,502.7h0.95V570.1h-0.95ZM1092.81,501.9h0.95V570.1h-0.95ZM1093.41,501.9h0.95V568.5h-0.95ZM1094.01,500.1h0.95V568.5h-0.95ZM1094.61,500.1h0.95V580.9h-0.95ZM1095.21,507.9h0.95V580.9h-0.95ZM1095.81,507.9h0.95V564.9h-0.95ZM1096.41,496.6h0.95V564.9h-0.95ZM1097.01,496.6h0.95V572.5h-0.95ZM1097.61,507.0h0.95V572.5h-0.95ZM1098.21,507.0h0.95V563.6h-0.95ZM1098.81,562.4h0.95V564.4h-0.95ZM1099.41,500.1h0.95V564.4h-0.95ZM1100.01,500.1h0.95V567.7h-0.95ZM1100.61,502.0h0.95V567.7h-0.95ZM1101.21,502.0h0.95V564.6h-0.95ZM1101.81,508.8h0.95V564.6h-0.95ZM1102.41,508.8h0.95V564.1h-0.95ZM1103.01,498.6h0.95V564.1h-0.95ZM1103.61,498.6h0.95V562.7h-0.95ZM1104.21,497.3h0.95V562.7h-0.95ZM1104.81,497.3h0.95V562.7h-0.95ZM1105.41,493.0h0.95V562.7h-0.95ZM1106.01,493.0h0.95V562.6h-0.95ZM1106.61,493.9h0.95V562.6h-0.95ZM1107.21,493.9h0.95V561.0h-0.95ZM1107.81,505.8h0.95V561.0h-0.95ZM1108.41,505.8h0.95V563.2h-0.95ZM1109.01,497.2h0.95V563.2h-0.95ZM1109.61,497.2h0.95V564.9h-0.95ZM1110.21,505.5h0.95V564.9h-0.95ZM1110.81,505.5h0.95V562.9h-0.95ZM1111.41,561.7h0.95V575.7h-0.95ZM1112.01,501.2h0.95V575.7h-0.95ZM1112.61,501.2h0.95V590.9h-0.95ZM1113.21,497.9h0.95V590.9h-0.95ZM1113.81,497.9h0.95V588.7h-0.95ZM1114.41,498.5h0.95V588.7h-0.95ZM1115.01,498.5h0.95V585.7h-0.95ZM1115.61,490.3h0.95V585.7h-0.95ZM1116.21,490.3h0.95V503.1h-0.95ZM1116.81,501.9h0.95V584.6h-0.95ZM1117.41,491.0h0.95V584.6h-0.95ZM1118.01,491.0h0.95V558.9h-0.95ZM1118.61,488.6h0.95V558.9h-0.95ZM1119.21,488.6h0.95V572.3h-0.95ZM1119.81,493.8h0.95V572.3h-0.95ZM1120.41,493.8h0.95V574.6h-0.95ZM1121.01,500.3h0.95V574.6h-0.95ZM1121.61,500.3h0.95V556.6h-0.95ZM1122.21,496.2h0.95V556.6h-0.95ZM1122.81,496.2h0.95V558.2h-0.95ZM1123.41,497.8h0.95V558.2h-0.95ZM1124.01,497.8h0.95V579.0h-0.95ZM1124.61,487.6h0.95V579.0h-0.95ZM1125.21,487.6h0.95V562.3h-0.95ZM1125.81,501.9h0.95V562.3h-0.95ZM1126.41,501.9h0.95V559.7h-0.95ZM1127.01,498.4h0.95V559.7h-0.95ZM1127.61,498.4h0.95V560.8h-0.95ZM1128.21,487.6h0.95V560.8h-0.95ZM1128.81,487.6h0.95V556.4h-0.95ZM1129.41,493.8h0.95V556.4h-0.95ZM1130.01,493.8h0.95V543.7h-0.95ZM1130.61,498.5h0.95V543.7h-0.95ZM1131.21,498.5h0.95V560.2h-0.95ZM1131.81,490.8h0.95V560.2h-0.95ZM1132.41,490.8h0.95V560.4h-0.95ZM1133.01,500.0h0.95V560.4h-0.95ZM1133.61,500.0h0.95V558.4h-0.95ZM1134.21,497.7h0.95V558.4h-0.95ZM1134.81,497.7h0.95V558.9h-0.95ZM1135.41,489.5h0.95V558.9h-0.95ZM1136.01,489.5h0.95V558.9h-0.95ZM1136.61,488.2h0.95V558.9h-0.95ZM1137.21,488.2h0.95V569.9h-0.95ZM1137.81,488.7h0.95V569.9h-0.95ZM1138.41,488.7h0.95V497.1h-0.95ZM1139.01,495.9h0.95V559.9h-0.95ZM1139.61,493.0h0.95V559.9h-0.95ZM1140.21,493.0h0.95V567.8h-0.95ZM1140.81,494.3h0.95V567.8h-0.95ZM1141.41,494.3h0.95V561.9h-0.95ZM1142.01,494.7h0.95V561.9h-0.95ZM1142.61,494.7h0.95V576.9h-0.95ZM1143.21,490.3h0.95V576.9h-0.95ZM1143.81,490.3h0.95V554.2h-0.95ZM1144.41,493.9h0.95V554.2h-0.95ZM1145.01,493.9h0.95V551.7h-0.95ZM1145.61,492.4h0.95V551.7h-0.95ZM1146.21,492.4h0.95V577.9h-0.95ZM1146.81,497.9h0.95V577.9h-0.95ZM1147.41,497.9h0.95V554.5h-0.95ZM1148.01,488.6h0.95V554.5h-0.95ZM1148.61,488.6h0.95V556.5h-0.95ZM1149.21,494.7h0.95V556.5h-0.95ZM1149.81,494.7h0.95V560.5h-0.95ZM1150.41,487.3h0.95V560.5h-0.95ZM1151.01,487.3h0.95V552.7h-0.95ZM1151.61,491.5h0.95V552.7h-0.95ZM1152.21,491.5h0.95V573.1h-0.95ZM1152.81,494.9h0.95V573.1h-0.95ZM1153.41,494.9h0.95V559.5h-0.95ZM1154.01,494.9h0.95V559.5h-0.95ZM1154.61,494.9h0.95V576.7h-0.95ZM1155.21,494.8h0.95V576.7h-0.95ZM1155.81,494.8h0.95V557.5h-0.95ZM1156.41,486.5h0.95V557.5h-0.95ZM1157.01,486.5h0.95V554.2h-0.95ZM1157.61,498.5h0.95V554.2h-0.95ZM1158.21,498.5h0.95V559.3h-0.95ZM1158.81,498.9h0.95V559.3h-0.95ZM1159.41,498.9h0.95V551.0h-0.95ZM1160.01,492.9h0.95V551.0h-0.95ZM1160.61,492.9h0.95V558.2h-0.95ZM1161.21,505.6h0.95V558.2h-0.95ZM1161.81,505.6h0.95V563.2h-0.95ZM1162.41,494.2h0.95V563.2h-0.95ZM1163.01,494.2h0.95V552.3h-0.95ZM1163.61,494.0h0.95V552.3h-0.95ZM1164.21,494.0h0.95V497.6h-0.95ZM1164.81,496.4h0.95V559.3h-0.95ZM1165.41,494.0h0.95V559.3h-0.95ZM1166.01,494.0h0.95V574.6h-0.95ZM1166.61,491.9h0.95V574.6h-0.95ZM1167.21,491.9h0.95V553.1h-0.95ZM1167.81,489.7h0.95V553.1h-0.95ZM1168.41,489.7h0.95V552.8h-0.95ZM1169.01,488.1h0.95V552.8h-0.95ZM1169.61,488.1h0.95V564.0h-0.95ZM1170.21,487.7h0.95V564.0h-0.95ZM1170.81,487.7h0.95V553.9h-0.95ZM1171.41,489.9h0.95V553.9h-0.95ZM1172.01,489.9h0.95V557.8h-0.95ZM1172.61,496.1h0.95V557.8h-0.95ZM1173.21,496.1h0.95V555.8h-0.95ZM1173.81,487.3h0.95V555.8h-0.95ZM1174.41,487.3h0.95V559.3h-0.95ZM1175.01,553.9h0.95V559.3h-0.95ZM1175.61,493.3h0.95V555.1h-0.95ZM1176.21,493.3h0.95V541.8h-0.95ZM1176.81,485.0h0.95V541.8h-0.95ZM1177.41,485.0h0.95V492.7h-0.95ZM1178.01,491.5h0.95V536.4h-0.95ZM1178.61,486.0h0.95V536.4h-0.95ZM1179.21,486.0h0.95V536.3h-0.95ZM1179.81,483.2h0.95V536.3h-0.95ZM1180.41,483.2h0.95V535.6h-0.95ZM1181.01,492.1h0.95V535.6h-0.95ZM1181.61,492.1h0.95V531.8h-0.95ZM1182.21,489.2h0.95V531.8h-0.95ZM1182.81,489.2h0.95V541.2h-0.95ZM1183.41,484.2h0.95V541.2h-0.95ZM1184.01,484.2h0.95V544.3h-0.95ZM1184.61,485.9h0.95V544.3h-0.95ZM1185.21,485.9h0.95V535.7h-0.95ZM1185.81,487.0h0.95V535.7h-0.95ZM1186.41,487.0h0.95V535.2h-0.95ZM1187.01,486.1h0.95V535.2h-0.95ZM1187.61,486.1h0.95V536.3h-0.95ZM1188.21,511.7h0.95V536.3h-0.95ZM1188.81,511.7h0.95V538.2h-0.95ZM1189.41,493.4h0.95V538.2h-0.95ZM1190.01,493.4h0.95V535.2h-0.95ZM1190.61,487.5h0.95V535.2h-0.95ZM1191.21,487.5h0.95V536.3h-0.95ZM1191.81,535.1h0.95V545.1h-0.95ZM1192.41,487.0h0.95V545.1h-0.95ZM1193.01,487.0h0.95V534.7h-0.95ZM1193.61,487.2h0.95V534.7h-0.95ZM1194.21,487.2h0.95V534.1h-0.95ZM1194.81,482.3h0.95V534.1h-0.95ZM1195.41,482.3h0.95V540.9h-0.95ZM1196.01,485.2h0.95V540.9h-0.95ZM1196.61,485.2h0.95V537.5h-0.95ZM1197.21,490.7h0.95V537.5h-0.95ZM1197.81,490.7h0.95V537.6h-0.95ZM1198.41,491.9h0.95V537.6h-0.95ZM1199.01,491.9h0.95V538.2h-0.95ZM1199.61,487.5h0.95V538.2h-0.95ZM1200.21,487.5h0.95V539.2h-0.95ZM1200.81,491.9h0.95V539.2h-0.95ZM1201.41,491.9h0.95V541.6h-0.95ZM1202.01,484.9h0.95V541.6h-0.95ZM1202.61,484.9h0.95V531.6h-0.95ZM1203.21,491.7h0.95V531.6h-0.95ZM1203.81,491.7h0.95V532.4h-0.95ZM1204.41,482.4h0.95V532.4h-0.95ZM1205.01,482.4h0.95V533.3h-0.95ZM1205.61,486.6h0.95V533.3h-0.95ZM1206.21,486.6h0.95V538.6h-0.95ZM1206.81,491.2h0.95V538.6h-0.95ZM1207.41,491.2h0.95V536.5h-0.95ZM1208.01,486.9h0.95V536.5h-0.95ZM1208.61,486.9h0.95V540.6h-0.95ZM1209.21,486.5h0.95V540.6h-0.95ZM1209.81,486.5h0.95V541.7h-0.95ZM1210.41,486.0h0.95V541.7h-0.95ZM1211.01,486.0h0.95V535.8h-0.95ZM1211.61,487.9h0.95V535.8h-0.95ZM1212.21,487.9h0.95V531.8h-0.95ZM1212.81,485.3h0.95V531.8h-0.95ZM1213.41,485.3h0.95V533.9h-0.95ZM1214.01,487.8h0.95V533.9h-0.95ZM1214.61,487.8h0.95V536.8h-0.95ZM1215.21,488.9h0.95V536.8h-0.95ZM1215.81,488.9h0.95V540.0h-0.95ZM1216.41,487.5h0.95V540.0h-0.95ZM1217.01,487.5h0.95V531.1h-0.95ZM1217.61,482.4h0.95V531.1h-0.95ZM1218.21,482.4h0.95V540.8h-0.95ZM1218.81,482.0h0.95V540.8h-0.95ZM1219.41,482.0h0.95V534.9h-0.95ZM1220.01,488.8h0.95V534.9h-0.95Z" fill="#ff7043" fill-opacity="0.2"/><line x1="1001.60" y1="487" x2="1001.60" y2="652.5" stroke="#9a9a9a" stroke-width="2"/><path d="M1001.61,645.59 L1002.11,640.35 L1002.61,634.74 L1003.11,628.76 L1003.61,623.30 L1004.11,620.14 L1004.61,619.21 L1005.11,617.49 L1005.61,616.28 L1006.11,615.61 L1006.61,615.82 L1007.11,613.08 L1007.61,614.64 L1008.11,615.64 L1008.61,616.77 L1009.11,617.33 L1009.61,619.13 L1010.11,620.15 L1010.61,619.73 L1011.11,618.64 L1011.61,619.93 L1012.11,619.64 L1012.61,618.49 L1013.11,619.01 L1013.61,618.95 L1014.11,618.86 L1014.61,616.95 L1015.11,616.95 L1015.61,618.55 L1016.11,617.58 L1016.61,617.84 L1017.11,617.57 L1017.61,619.46 L1018.11,618.50 L1018.61,618.60 L1019.11,619.87 L1019.61,618.71 L1020.11,620.32 L1020.61,618.70 L1021.11,620.75 L1021.61,618.82 L1022.11,618.84 L1022.61,619.58 L1023.11,620.28 L1023.61,619.64 L1024.11,620.15 L1024.61,619.07 L1025.11,620.04 L1025.61,617.94 L1026.11,617.81 L1026.61,618.12 L1027.11,616.57 L1027.61,615.20 L1028.11,616.12 L1028.61,614.08 L1029.11,614.21 L1029.61,613.46 L1030.11,613.19 L1030.61,611.98 L1031.11,613.46 L1031.61,612.87 L1032.11,611.92 L1032.61,611.02 L1033.11,610.88 L1033.61,610.26 L1034.11,610.27 L1034.61,610.12 L1035.11,610.39 L1035.61,608.55 L1036.11,610.14 L1036.61,609.73 L1037.11,608.22 L1037.61,607.25 L1038.11,605.19 L1038.61,604.49 L1039.11,603.09 L1039.61,602.24 L1040.11,602.65 L1040.61,600.44 L1041.11,600.58 L1041.61,599.78 L1042.11,597.94 L1042.61,597.55 L1043.11,596.34 L1043.61,595.53 L1044.11,594.87 L1044.61,594.39 L1045.11,592.66 L1045.61,594.00 L1046.11,591.58 L1046.61,590.81 L1047.11,590.46 L1047.61,591.19 L1048.11,590.96 L1048.61,590.38 L1049.11,587.82 L1049.61,587.79 L1050.11,588.04 L1050.61,585.96 L1051.11,586.05 L1051.61,585.81 L1052.11,584.53 L1052.61,584.00 L1053.11,583.80 L1053.61,582.42 L1054.11,583.56 L1054.61,582.02 L1055.11,580.83 L1055.61,581.07 L1056.11,580.27 L1056.61,580.40 L1057.11,578.59 L1057.61,578.78 L1058.11,577.59 L1058.61,578.30 L1059.11,577.56 L1059.61,577.76 L1060.11,576.89 L1060.61,576.13 L1061.11,575.87 L1061.61,574.67 L1062.11,574.65 L1062.61,573.82 L1063.11,573.48 L1063.61,572.88 L1064.11,571.44 L1064.61,571.40 L1065.11,571.76 L1065.61,570.23 L1066.11,570.36 L1066.61,570.94 L1067.11,569.75 L1067.61,569.98 L1068.11,568.52 L1068.61,567.32 L1069.11,567.91 L1069.61,568.19 L1070.11,567.12 L1070.61,566.40 L1071.11,567.11 L1071.61,565.54 L1072.11,566.41 L1072.61,565.49 L1073.11,563.82 L1073.61,564.42 L1074.11,564.00 L1074.61,563.45 L1075.11,563.27 L1075.61,562.20 L1076.11,562.61 L1076.61,561.87 L1077.11,561.90 L1077.61,561.45 L1078.11,560.69 L1078.61,560.12 L1079.11,559.01 L1079.61,558.31 L1080.11,558.82 L1080.61,558.44 L1081.11,557.75 L1081.61,557.64 L1082.11,558.08 L1082.61,557.68 L1083.11,557.35 L1083.61,555.21 L1084.11,554.99 L1084.61,556.07 L1085.11,555.60 L1085.61,553.87 L1086.11,554.93 L1086.61,552.96 L1087.11,553.54 L1087.61,553.83 L1088.11,553.05 L1088.61,553.85 L1089.11,552.13 L1089.61,551.74 L1090.11,552.14 L1090.61,551.51 L1091.11,552.34 L1091.61,551.97 L1092.11,550.40 L1092.61,550.29 L1093.11,549.78 L1093.61,551.59 L1094.11,549.70 L1094.61,549.29 L1095.11,549.31 L1095.61,549.38 L1096.11,548.50 L1096.61,549.44 L1097.11,548.62 L1097.61,547.87 L1098.11,548.93 L1098.61,547.60 L1099.11,547.59 L1099.61,546.34 L1100.11,546.17 L1100.61,546.98 L1101.11,544.87 L1101.61,546.33 L1102.11,544.41 L1102.61,543.41 L1103.11,543.92 L1103.61,544.56 L1104.11,543.66 L1104.61,542.96 L1105.11,541.60 L1105.61,542.38 L1106.11,543.09 L1106.61,542.32 L1107.11,541.99 L1107.61,539.85 L1108.11,539.84 L1108.61,539.87 L1109.11,540.64 L1109.61,539.92 L1110.11,539.04 L1110.61,538.20 L1111.11,538.47 L1111.61,538.98 L1112.11,538.62 L1112.61,539.06 L1113.11,538.02 L1113.61,537.98 L1114.11,536.09 L1114.61,536.53 L1115.11,535.80 L1115.61,535.91 L1116.11,536.75 L1116.61,535.92 L1117.11,536.12 L1117.61,536.18 L1118.11,534.74 L1118.61,534.60 L1119.11,533.57 L1119.61,534.72 L1120.11,534.74 L1120.61,535.40 L1121.11,533.76 L1121.61,533.48 L1122.11,535.07 L1122.61,532.75 L1123.11,533.12 L1123.61,533.84 L1124.11,534.48 L1124.61,532.72 L1125.11,533.00 L1125.61,533.69 L1126.11,532.10 L1126.61,531.73 L1127.11,532.14 L1127.61,533.12 L1128.11,532.44 L1128.61,533.14 L1129.11,531.62 L1129.61,532.62 L1130.11,532.16 L1130.61,532.91 L1131.11,532.25 L1131.61,531.80 L1132.11,530.81 L1132.61,531.14 L1133.11,530.24 L1133.61,530.14 L1134.11,531.24 L1134.61,531.87 L1135.11,530.79 L1135.61,530.05 L1136.11,530.96 L1136.61,531.00 L1137.11,531.27 L1137.61,531.02 L1138.11,529.03 L1138.61,529.52 L1139.11,529.08 L1139.61,530.58 L1140.11,528.32 L1140.61,528.65 L1141.11,529.21 L1141.61,528.66 L1142.11,529.82 L1142.61,527.94 L1143.11,528.73 L1143.61,529.45 L1144.11,528.15 L1144.61,528.05 L1145.11,528.84 L1145.61,528.89 L1146.11,527.78 L1146.61,528.09 L1147.11,527.60 L1147.61,526.84 L1148.11,526.68 L1148.61,526.15 L1149.11,527.12 L1149.61,527.34 L1150.11,526.89 L1150.61,526.33 L1151.11,525.47 L1151.61,526.78 L1152.11,524.41 L1152.61,525.67 L1153.11,524.38 L1153.61,524.99 L1154.11,525.72 L1154.61,525.93 L1155.11,525.24 L1155.61,526.15 L1156.11,525.02 L1156.61,525.20 L1157.11,524.17 L1157.61,524.37 L1158.11,525.18 L1158.61,525.92 L1159.11,525.97 L1159.61,525.08 L1160.11,526.37 L1160.61,524.42 L1161.11,525.46 L1161.61,524.92 L1162.11,524.72 L1162.61,525.20 L1163.11,526.08 L1163.61,524.76 L1164.11,525.93 L1164.61,526.07 L1165.11,525.65 L1165.61,525.92 L1166.11,525.24 L1166.61,525.43 L1167.11,524.88 L1167.61,525.94 L1168.11,525.47 L1168.61,526.45 L1169.11,526.39 L1169.61,526.27 L1170.11,525.17 L1170.61,526.44 L1171.11,526.12 L1171.61,525.81 L1172.11,525.12 L1172.61,525.23 L1173.11,523.64 L1173.61,525.06 L1174.11,523.02 L1174.61,523.83 L1175.11,521.99 L1175.61,522.61 L1176.11,522.43 L1176.61,521.99 L1177.11,521.72 L1177.61,520.52 L1178.11,520.57 L1178.61,521.09 L1179.11,519.56 L1179.61,520.00 L1180.11,517.99 L1180.61,518.15 L1181.11,517.15 L1181.61,516.82 L1182.11,518.15 L1182.61,517.24 L1183.11,517.22 L1183.61,517.65 L1184.11,517.38 L1184.61,517.64 L1185.11,517.97 L1185.61,517.58 L1186.11,517.74 L1186.61,516.60 L1187.11,517.71 L1187.61,517.04 L1188.11,518.23 L1188.61,518.04 L1189.11,516.71 L1189.61,516.87 L1190.11,516.42 L1190.61,516.72 L1191.11,516.30 L1191.61,517.67 L1192.11,517.94 L1192.61,517.74 L1193.11,517.20 L1193.61,518.03 L1194.11,516.97 L1194.61,516.77 L1195.11,516.10 L1195.61,517.97 L1196.11,517.64 L1196.61,517.72 L1197.11,516.61 L1197.61,515.06 L1198.11,516.93 L1198.61,516.05 L1199.11,516.34 L1199.61,514.07 L1200.11,516.00 L1200.61,513.75 L1201.11,513.87 L1201.61,513.24 L1202.11,512.80 L1202.61,513.12 L1203.11,513.40 L1203.61,513.06 L1204.11,513.80 L1204.61,512.01 L1205.11,512.46 L1205.61,511.57 L1206.11,512.56 L1206.61,510.80 L1207.11,512.22 L1207.61,512.47 L1208.11,511.59 L1208.61,512.33 L1209.11,511.83 L1209.61,511.88 L1210.11,512.32 L1210.61,512.11 L1211.11,510.51 L1211.61,511.60 L1212.11,509.99 L1212.61,510.75 L1213.11,510.74 L1213.61,510.24 L1214.11,511.00 L1214.61,511.62 L1215.11,509.60 L1215.61,509.63 L1216.11,509.57 L1216.61,509.09 L1217.11,511.13 L1217.61,510.66 L1218.11,509.20 L1218.61,509.13 L1219.11,509.64 L1219.61,510.51 L1220.11,509.43 L1220.61,509.46 L1220.77,509.53" fill="none" stroke="#ff7043" stroke-width="2.1" stroke-linejoin="round"/></g><line x1="1001.60" y1="648" x2="1001.60" y2="652.5" stroke="#c4c4c4" stroke-width="1.5"/><circle cx="1220.77" cy="509.53" r="3.7" fill="#ff7043"/></svg><div class="yl" style="right:344.20px;top:492.61px">0.980</div><div class="yl" style="right:344.20px;top:515.61px">0.960</div><div class="yl" style="right:344.20px;top:538.61px">0.940</div><div class="yl" style="right:344.20px;top:561.61px">0.920</div><div class="yl" style="right:344.20px;top:584.61px">0.900</div><div class="yl" style="right:344.20px;top:607.61px">0.880</div><div class="yl" style="right:344.20px;top:630.61px">0.860</div><div class="xl" style="left:961.60px;top:656.11px">0.000</div><div class="xl" style="left:1013.59px;top:656.11px">6.000k</div><div class="xl" style="left:1065.58px;top:656.11px">12.00k</div><div class="xl" style="left:1117.57px;top:656.11px">18.00k</div><div class="xl" style="left:1169.56px;top:656.11px">24.00k</div><div class="t" style="left:930.60px;top:464.10px;font-size:13px;line-height:13px;color:#212121;font-weight:400;">Train/f1</div><svg class="ic" style="left:936.10px;top:671.80px" width="80" height="22" viewBox="0 0 80 22"><path d="M3,8.6 V4.6 H7 M9.5,4.6 H13.5 V8.6 M13.5,11.600000000000001 V15.600000000000001 H9.5 M7,15.600000000000001 H3 V11.600000000000001" fill="none" stroke="#2196f3" stroke-width="2"/><rect x="29.2" y="3.1" width="16.2" height="3" fill="#2196f3"/><rect x="29.2" y="8.4" width="16.2" height="2.6" fill="#2196f3"/><rect x="29.2" y="13.2" width="16.2" height="1.6" fill="#2196f3"/><rect x="29.2" y="16.3" width="16.2" height="1.2" fill="#2196f3" opacity="0.55"/><rect x="57" y="3" width="17" height="14.1" rx="2" fill="none" stroke="#2196f3" stroke-width="2"/><path d="M63.9,6.199999999999999 L65.5,4.199999999999999 L67.1,6.199999999999999Z M63.9,14.0 L65.5,16.0 L67.1,14.0Z M60.3,8.5 L58.6,10.1 L60.3,11.7Z M70.9,8.5 L72.6,10.1 L70.9,11.7Z" fill="#2196f3"/></svg></div>
</body></html>
